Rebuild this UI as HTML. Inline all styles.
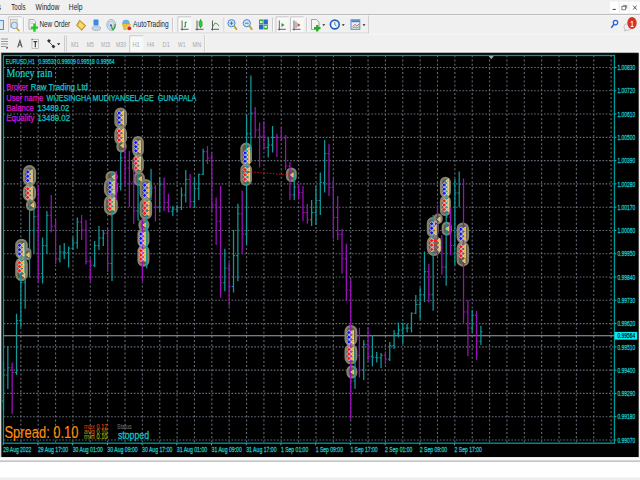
<!DOCTYPE html>
<html><head><meta charset="utf-8"><title>MT4</title>
<style>html,body{margin:0;padding:0;width:640px;height:480px;overflow:hidden;background:#f0f0f0}svg{display:block}</style>
</head><body>
<svg width="640" height="480" viewBox="0 0 640 480">
<rect x="0" y="0" width="640" height="480" fill="#f0f0f0"/>
<rect x="0" y="12.9" width="640" height="1" fill="#f7f7f7"/>
<rect x="0" y="13.9" width="640" height="1.15" fill="#bdbdbd"/>
<rect x="0" y="15.05" width="640" height="1.1" fill="#f5f5f5"/>
<text x="-3.5" y="10" font-family="'Liberation Sans', sans-serif" font-size="8.8" fill="#1e1e1e" font-weight="normal" text-anchor="start" textLength="4.5" lengthAdjust="spacingAndGlyphs" >s</text>
<text x="11.3" y="10" font-family="'Liberation Sans', sans-serif" font-size="8.8" fill="#1e1e1e" font-weight="normal" text-anchor="start" textLength="14.2" lengthAdjust="spacingAndGlyphs" >Tools</text>
<text x="35.6" y="10" font-family="'Liberation Sans', sans-serif" font-size="8.8" fill="#1e1e1e" font-weight="normal" text-anchor="start" textLength="23.8" lengthAdjust="spacingAndGlyphs" >Window</text>
<text x="68.8" y="10" font-family="'Liberation Sans', sans-serif" font-size="8.8" fill="#1e1e1e" font-weight="normal" text-anchor="start" textLength="13.8" lengthAdjust="spacingAndGlyphs" >Help</text>
<rect x="610" y="1.6" width="8.5" height="11.4" fill="#ffffff"/>
<rect x="620" y="1.6" width="8.5" height="11.4" fill="#ffffff"/>
<rect x="629.6" y="1.6" width="10.399999999999977" height="11.4" fill="#ffffff"/>
<rect x="612.6" y="8.9" width="3.2" height="1" fill="#404040"/>
<rect x="621.9" y="6.6" width="3.6" height="3.2" fill="none" stroke="#505050" stroke-width="0.7"/>
<path d="M623.1 5.4 H626.7 V8.6" fill="none" stroke="#505050" stroke-width="0.7"/>
<path d="M633.1 5.6 L636.6 9.6 M636.6 5.6 L633.1 9.6" stroke="#404040" stroke-width="0.85"/>
<rect x="0" y="32.6" width="368.6" height="1" fill="#d0d0d0"/>
<rect x="368" y="15.5" width="0.9" height="18.1" fill="#d0d0d0"/>
<rect x="0" y="33.6" width="640" height="0.9" fill="#f8f8f8"/>
<rect x="0" y="50.8" width="640" height="1.6" fill="#f6f6f6"/>
<rect x="-4" y="20.5" width="7.5" height="9" fill="#dde8f5" stroke="#5a8fd0" stroke-width="1"/>
<rect x="8.2" y="16.3" width="13.50" height="15.70" fill="#f8f8f8"/>
<path d="M8.7 32 V16.8 H21.7" fill="none" stroke="#c8c8c8" stroke-width="1"/>
<rect x="10.3" y="19.2" width="6.8" height="8" fill="#ece6da" stroke="#b0a490" stroke-width="0.6"/>
<ellipse cx="14.3" cy="25.4" rx="3.1" ry="3.4" fill="#d4e6f6" stroke="#6a9ad0" stroke-width="0.9"/>
<path d="M16.6 28 L19.4 31.2" stroke="#c8a020" stroke-width="1.5"/>
<rect x="23.2" y="17.5" width="0.9" height="14.0" fill="#c4c4c4"/>
<rect x="24.099999999999998" y="17.5" width="0.8" height="14.0" fill="#fbfbfb"/>
<path d="M29 19.5 H33.6 L35.6 21.5 V29.2 H29 Z" fill="#f2f2f2" stroke="#a0a0a0" stroke-width="0.8"/>
<path d="M30.2 21.8 H33 M30.2 23.6 H34" stroke="#b8b8b8" stroke-width="0.6"/>
<path d="M30.9 27.6 H38 M34.45 23.6 V31.8" stroke="#1ec81e" stroke-width="2.3"/>
<text x="39.4" y="26.9" font-family="'Liberation Sans', sans-serif" font-size="9.2" fill="#1e1e1e" font-weight="normal" text-anchor="start" textLength="30.8" lengthAdjust="spacingAndGlyphs" >New Order</text>
<path d="M76.6 25.4 L79.6 20.3 L85.6 25.6 L81.8 30.3 Z" fill="#e8c040" stroke="#a87410" stroke-width="0.8"/>
<path d="M78.2 25.6 L80.2 22.2 L84 25.6 L81.6 28.6 Z" fill="#f6dc70"/>
<rect x="93.5" y="19.5" width="5" height="6" rx="1" fill="#3c8ae0"/>
<ellipse cx="96.3" cy="28.2" rx="4.3" ry="2.3" fill="#c8d4e0" stroke="#8aa0b8" stroke-width="0.6"/>
<ellipse cx="111.2" cy="24.9" rx="4.4" ry="5.4" fill="#d8e2ea" stroke="#90a8c0" stroke-width="0.8"/>
<ellipse cx="111.2" cy="24.9" rx="2.6" ry="3.6" fill="none" stroke="#a8c0d0" stroke-width="0.7"/>
<circle cx="110.9" cy="25.3" r="1" fill="#2050c0"/>
<path d="M111.5 26 Q112 29 113 30 Q115.3 28 115.2 24" fill="none" stroke="#30a040" stroke-width="1.2"/>
<circle cx="126" cy="23.5" r="3.8" fill="#6ab0e0"/>
<path d="M122 24 H131 L129.5 30 H123.5 Z" fill="#e8c040"/>
<circle cx="129.3" cy="28.3" r="2.3" fill="#e02020" stroke="#ffffff" stroke-width="0.6"/>
<text x="133.1" y="26.9" font-family="'Liberation Sans', sans-serif" font-size="9.2" fill="#1e1e1e" font-weight="normal" text-anchor="start" textLength="35.6" lengthAdjust="spacingAndGlyphs" >AutoTrading</text>
<rect x="172.2" y="17.5" width="0.9" height="14.0" fill="#c4c4c4"/>
<rect x="173.1" y="17.5" width="0.8" height="14.0" fill="#fbfbfb"/>
<rect x="177.3" y="16.3" width="13.90" height="15.70" fill="#f8f8f8"/>
<path d="M177.8 32 V16.8 H191.2" fill="none" stroke="#c8c8c8" stroke-width="1"/>
<path d="M182.1 20.5 V30.5 M180.6 29.3 H188.6" stroke="#505050" stroke-width="0.9"/>
<path d="M185.3 21.8 V27.3 M184 26.8 H185.3 M185.3 22.3 H186.8" stroke="#20a030" stroke-width="1.1"/>
<path d="M197.0 20.5 V30.5 M195.5 29.3 H203.5" stroke="#505050" stroke-width="0.9"/>
<path d="M200.6 19 V28.2" stroke="#108a10" stroke-width="0.8"/>
<rect x="199.1" y="21" width="3" height="5.6" rx="0.8" fill="#2ed030" stroke="#10901a" stroke-width="0.6"/>
<path d="M212.5 20.5 V30.5 M211 29.3 H219" stroke="#505050" stroke-width="0.9"/>
<path d="M212.5 27 L215 23 L217.5 24 L219 26" fill="none" stroke="#30a030" stroke-width="0.9"/>
<rect x="223.6" y="17.5" width="0.9" height="14.0" fill="#c4c4c4"/>
<rect x="224.5" y="17.5" width="0.8" height="14.0" fill="#fbfbfb"/>
<circle cx="231.5" cy="23.2" r="3.6" fill="#cfe4f8" stroke="#4a88cc" stroke-width="1"/>
<path d="M234.1 25.8 L236.8 29.8" stroke="#c89a20" stroke-width="1.8"/>
<path d="M229.7 23.2 H233.3" stroke="#3070b8" stroke-width="0.9"/>
<path d="M231.5 21.4 V25" stroke="#3070b8" stroke-width="0.9"/>
<circle cx="246.8" cy="23.2" r="3.6" fill="#cfe4f8" stroke="#4a88cc" stroke-width="1"/>
<path d="M249.4 25.8 L252.10000000000002 29.8" stroke="#c89a20" stroke-width="1.8"/>
<path d="M245.0 23.2 H248.60000000000002" stroke="#3070b8" stroke-width="0.9"/>
<rect x="259" y="19.5" width="4.3" height="4.8" fill="#38a838"/>
<rect x="263.6" y="19.5" width="4.3" height="4.8" fill="#2a66d0"/>
<rect x="259" y="24.6" width="4.3" height="4.8" fill="#2a66d0"/>
<rect x="263.6" y="24.6" width="4.3" height="4.8" fill="#38a838"/>
<rect x="260" y="21" width="2.5" height="2" fill="#e8f0e8"/><rect x="264.4" y="25.8" width="2.5" height="2" fill="#e8f0e8"/>
<rect x="272.2" y="17.5" width="0.9" height="14.0" fill="#c4c4c4"/>
<rect x="273.09999999999997" y="17.5" width="0.8" height="14.0" fill="#fbfbfb"/>
<rect x="275.5" y="16.3" width="13.30" height="15.70" fill="#f8f8f8"/>
<path d="M276.0 32 V16.8 H288.8" fill="none" stroke="#c8c8c8" stroke-width="1"/>
<rect x="290" y="16.3" width="13.60" height="15.70" fill="#f8f8f8"/>
<path d="M290.5 32 V16.8 H303.6" fill="none" stroke="#c8c8c8" stroke-width="1"/>
<path d="M279.3 20.5 V30.5 M277.8 29.3 H285.8" stroke="#505050" stroke-width="0.9"/>
<path d="M281.5 23 L284.5 25 L281.5 27 Z" fill="#20a020"/>
<path d="M294.0 20.5 V30.5 M292.5 29.3 H300.5" stroke="#505050" stroke-width="0.9"/>
<path d="M296 21.5 V28" stroke="#606060" stroke-width="0.8"/><path d="M297.5 23 L300.5 25 L297.5 27 Z" fill="#d05020"/>
<rect x="306" y="17.5" width="0.9" height="14.0" fill="#c4c4c4"/>
<rect x="306.9" y="17.5" width="0.8" height="14.0" fill="#fbfbfb"/>
<path d="M311.5 19.5 H316.5 L319 22 V29.5 H311.5 Z" fill="#f4f4f4" stroke="#909090" stroke-width="0.8"/>
<path d="M314 28.2 H320.5 M317.2 25 V31.5" stroke="#20b020" stroke-width="2.2"/>
<path d="M322.3 24.3 H325.3 L323.8 26 Z" fill="#202020"/>
<circle cx="334.8" cy="24.5" r="4.4" fill="#f0f6ff" stroke="#2060c0" stroke-width="1.6"/>
<path d="M334.8 22 V24.8 L336.5 26" fill="none" stroke="#404040" stroke-width="0.7"/>
<path d="M341.8 24.3 H344.8 L343.3 26 Z" fill="#202020"/>
<rect x="351" y="19.8" width="8.8" height="9.5" fill="#e8f0fa" stroke="#4a80c0" stroke-width="0.9"/>
<rect x="351.5" y="20.2" width="8" height="2" fill="#4a80c0"/>
<path d="M352.5 26.5 L355 24.5 L357 26 L359 24" fill="none" stroke="#c04040" stroke-width="0.8"/>
<path d="M352.5 28 L355 27 L357 28 L359 26.5" fill="none" stroke="#40a040" stroke-width="0.8"/>
<path d="M362.5 24.3 H365.5 L364.0 26 Z" fill="#202020"/>
<circle cx="615.5" cy="22.6" r="2.2" fill="none" stroke="#2a62d0" stroke-width="1.2"/>
<path d="M614 24.3 L611.3 27.8" stroke="#2a62d0" stroke-width="1.5"/>
<ellipse cx="627.5" cy="27" rx="3.6" ry="3.3" fill="#f0f0f0" stroke="#b0b0b0" stroke-width="0.7"/>
<path d="M625 29.5 L624.3 31.2 L627 30" fill="#e0e0e0" stroke="#b0b0b0" stroke-width="0.5"/>
<ellipse cx="632" cy="23" rx="4.7" ry="5.9" fill="#d83220"/>
<text x="632" y="26.6" font-family="'Liberation Sans', sans-serif" font-size="9" fill="#ffffff" font-weight="bold" text-anchor="middle" textLength="3.2" lengthAdjust="spacingAndGlyphs" >1</text>
<path d="M1 39 H8 M1 41.5 H8 M1 44 H8 M1 46.5 H6.5" stroke="#808080" stroke-width="0.8"/>
<path d="M6 47.5 L8.2 46.5 L7 49.5 Z" fill="#404040"/>
<path d="M17.7 47.4 L19.9 40.6 L22.1 47.4 M18.6 45 H21.2" fill="none" stroke="#555555" stroke-width="1.15"/>
<rect x="32" y="39.3" width="6.6" height="9" fill="#f6f6f6" stroke="#a8a8a8" stroke-width="0.7"/>
<path d="M33.4 41.6 H37.3 M35.35 41.6 V47.2" stroke="#404040" stroke-width="1.2"/>
<rect x="31.6" y="38.8" width="1" height="1" fill="#404040"/>
<path d="M48.3 41.2 L53.8 46.8" stroke="#404040" stroke-width="0.9"/>
<path d="M47 40.8 L49 38.9 L50.9 40.8 L49 42.7 Z M51.5 46.6 L53.5 44.7 L55.4 46.6 L53.5 48.5 Z" fill="#303030"/>
<path d="M57 43.3 H60.3 L58.65 45.2 Z" fill="#202020"/>
<rect x="64.2" y="35.5" width="0.9" height="16.0" fill="#c4c4c4"/>
<rect x="65.10000000000001" y="35.5" width="0.8" height="16.0" fill="#fbfbfb"/>
<rect x="65.8" y="35.5" width="0.9" height="16" fill="#c4c4c4"/>
<text x="71" y="47.3" font-family="'Liberation Sans', sans-serif" font-size="7.8" fill="#a8a8a8" font-weight="normal" text-anchor="start" textLength="8" lengthAdjust="spacingAndGlyphs" >M1</text>
<text x="86.7" y="47.3" font-family="'Liberation Sans', sans-serif" font-size="7.8" fill="#a8a8a8" font-weight="normal" text-anchor="start" textLength="7.1" lengthAdjust="spacingAndGlyphs" >M5</text>
<text x="101" y="47.3" font-family="'Liberation Sans', sans-serif" font-size="7.8" fill="#a8a8a8" font-weight="normal" text-anchor="start" textLength="9.2" lengthAdjust="spacingAndGlyphs" >M15</text>
<text x="116" y="47.3" font-family="'Liberation Sans', sans-serif" font-size="7.8" fill="#a8a8a8" font-weight="normal" text-anchor="start" textLength="10.2" lengthAdjust="spacingAndGlyphs" >M30</text>
<rect x="129.2" y="35.2" width="14.00" height="17.30" fill="#f8f8f8"/>
<path d="M129.7 52.5 V35.7 H143.2" fill="none" stroke="#c8c8c8" stroke-width="1"/>
<text x="132.5" y="47.3" font-family="'Liberation Sans', sans-serif" font-size="7.8" fill="#a8a8a8" font-weight="normal" text-anchor="start" textLength="7.3" lengthAdjust="spacingAndGlyphs" >H1</text>
<text x="147" y="47.3" font-family="'Liberation Sans', sans-serif" font-size="7.8" fill="#a8a8a8" font-weight="normal" text-anchor="start" textLength="7.3" lengthAdjust="spacingAndGlyphs" >H4</text>
<text x="162.6" y="47.3" font-family="'Liberation Sans', sans-serif" font-size="7.8" fill="#a8a8a8" font-weight="normal" text-anchor="start" textLength="7.2" lengthAdjust="spacingAndGlyphs" >D1</text>
<text x="178" y="47.3" font-family="'Liberation Sans', sans-serif" font-size="7.8" fill="#a8a8a8" font-weight="normal" text-anchor="start" textLength="7.4" lengthAdjust="spacingAndGlyphs" >W1</text>
<text x="192.5" y="47.3" font-family="'Liberation Sans', sans-serif" font-size="7.8" fill="#a8a8a8" font-weight="normal" text-anchor="start" textLength="8.7" lengthAdjust="spacingAndGlyphs" >MN</text>
<rect x="204.3" y="35" width="0.9" height="16.700000000000003" fill="#c4c4c4"/>
<rect x="205.20000000000002" y="35" width="0.8" height="16.700000000000003" fill="#fbfbfb"/>
<rect x="0.8" y="52.4" width="637.8" height="404.6" fill="#8a8686"/>
<rect x="1.6" y="53.1" width="637" height="403.9" fill="#000000"/>
<rect x="0" y="457" width="640" height="0.8" fill="#e4e4e4"/>
<rect x="0" y="457.8" width="640" height="2.6" fill="#f8f8f8"/>
<rect x="0" y="460.4" width="640" height="1.6" fill="#c6c6c6"/>
<rect x="0" y="462" width="640" height="15.6" fill="#ffffff"/>
<rect x="0" y="477.6" width="640" height="2.4" fill="#f0f0f0"/>
<line x1="3.74" y1="67.5" x2="613.45" y2="67.5" stroke="#656d79" stroke-width="1.1" stroke-dasharray="1.6 1.654"/>
<line x1="3.74" y1="90.78" x2="613.45" y2="90.78" stroke="#656d79" stroke-width="1.1" stroke-dasharray="1.6 1.654"/>
<line x1="3.74" y1="114.06" x2="613.45" y2="114.06" stroke="#656d79" stroke-width="1.1" stroke-dasharray="1.6 1.654"/>
<line x1="3.74" y1="137.34" x2="613.45" y2="137.34" stroke="#656d79" stroke-width="1.1" stroke-dasharray="1.6 1.654"/>
<line x1="3.74" y1="160.62" x2="613.45" y2="160.62" stroke="#656d79" stroke-width="1.1" stroke-dasharray="1.6 1.654"/>
<line x1="3.74" y1="183.9" x2="613.45" y2="183.9" stroke="#656d79" stroke-width="1.1" stroke-dasharray="1.6 1.654"/>
<line x1="3.74" y1="207.18" x2="613.45" y2="207.18" stroke="#656d79" stroke-width="1.1" stroke-dasharray="1.6 1.654"/>
<line x1="3.74" y1="230.46" x2="613.45" y2="230.46" stroke="#656d79" stroke-width="1.1" stroke-dasharray="1.6 1.654"/>
<line x1="3.74" y1="253.74" x2="613.45" y2="253.74" stroke="#656d79" stroke-width="1.1" stroke-dasharray="1.6 1.654"/>
<line x1="3.74" y1="277.02" x2="613.45" y2="277.02" stroke="#656d79" stroke-width="1.1" stroke-dasharray="1.6 1.654"/>
<line x1="3.74" y1="300.3" x2="613.45" y2="300.3" stroke="#656d79" stroke-width="1.1" stroke-dasharray="1.6 1.654"/>
<line x1="3.74" y1="323.58000000000004" x2="613.45" y2="323.58000000000004" stroke="#656d79" stroke-width="1.1" stroke-dasharray="1.6 1.654"/>
<line x1="3.74" y1="346.86" x2="613.45" y2="346.86" stroke="#656d79" stroke-width="1.1" stroke-dasharray="1.6 1.654"/>
<line x1="3.74" y1="370.14" x2="613.45" y2="370.14" stroke="#656d79" stroke-width="1.1" stroke-dasharray="1.6 1.654"/>
<line x1="3.74" y1="393.42" x2="613.45" y2="393.42" stroke="#656d79" stroke-width="1.1" stroke-dasharray="1.6 1.654"/>
<line x1="3.74" y1="416.70000000000005" x2="613.45" y2="416.70000000000005" stroke="#656d79" stroke-width="1.1" stroke-dasharray="1.6 1.654"/>
<line x1="3.74" y1="439.98" x2="613.45" y2="439.98" stroke="#656d79" stroke-width="1.1" stroke-dasharray="1.6 1.654"/>
<line x1="20.86" y1="55.35" x2="20.86" y2="442.2" stroke="#656d79" stroke-width="1.1" stroke-dasharray="1.9 2.286"/>
<line x1="38.22" y1="55.35" x2="38.22" y2="442.2" stroke="#656d79" stroke-width="1.1" stroke-dasharray="1.9 2.286"/>
<line x1="55.58" y1="55.35" x2="55.58" y2="442.2" stroke="#656d79" stroke-width="1.1" stroke-dasharray="1.9 2.286"/>
<line x1="72.94" y1="55.35" x2="72.94" y2="442.2" stroke="#656d79" stroke-width="1.1" stroke-dasharray="1.9 2.286"/>
<line x1="90.3" y1="55.35" x2="90.3" y2="442.2" stroke="#656d79" stroke-width="1.1" stroke-dasharray="1.9 2.286"/>
<line x1="107.66" y1="55.35" x2="107.66" y2="442.2" stroke="#656d79" stroke-width="1.1" stroke-dasharray="1.9 2.286"/>
<line x1="125.02" y1="55.35" x2="125.02" y2="442.2" stroke="#656d79" stroke-width="1.1" stroke-dasharray="1.9 2.286"/>
<line x1="142.38" y1="55.35" x2="142.38" y2="442.2" stroke="#656d79" stroke-width="1.1" stroke-dasharray="1.9 2.286"/>
<line x1="159.74" y1="55.35" x2="159.74" y2="442.2" stroke="#656d79" stroke-width="1.1" stroke-dasharray="1.9 2.286"/>
<line x1="177.1" y1="55.35" x2="177.1" y2="442.2" stroke="#656d79" stroke-width="1.1" stroke-dasharray="1.9 2.286"/>
<line x1="194.45999999999998" y1="55.35" x2="194.45999999999998" y2="442.2" stroke="#656d79" stroke-width="1.1" stroke-dasharray="1.9 2.286"/>
<line x1="211.82" y1="55.35" x2="211.82" y2="442.2" stroke="#656d79" stroke-width="1.1" stroke-dasharray="1.9 2.286"/>
<line x1="229.18" y1="55.35" x2="229.18" y2="442.2" stroke="#656d79" stroke-width="1.1" stroke-dasharray="1.9 2.286"/>
<line x1="246.54" y1="55.35" x2="246.54" y2="442.2" stroke="#656d79" stroke-width="1.1" stroke-dasharray="1.9 2.286"/>
<line x1="263.9" y1="55.35" x2="263.9" y2="442.2" stroke="#656d79" stroke-width="1.1" stroke-dasharray="1.9 2.286"/>
<line x1="281.26" y1="55.35" x2="281.26" y2="442.2" stroke="#656d79" stroke-width="1.1" stroke-dasharray="1.9 2.286"/>
<line x1="298.62" y1="55.35" x2="298.62" y2="442.2" stroke="#656d79" stroke-width="1.1" stroke-dasharray="1.9 2.286"/>
<line x1="315.98" y1="55.35" x2="315.98" y2="442.2" stroke="#656d79" stroke-width="1.1" stroke-dasharray="1.9 2.286"/>
<line x1="333.34" y1="55.35" x2="333.34" y2="442.2" stroke="#656d79" stroke-width="1.1" stroke-dasharray="1.9 2.286"/>
<line x1="350.7" y1="55.35" x2="350.7" y2="442.2" stroke="#656d79" stroke-width="1.1" stroke-dasharray="1.9 2.286"/>
<line x1="368.06" y1="55.35" x2="368.06" y2="442.2" stroke="#656d79" stroke-width="1.1" stroke-dasharray="1.9 2.286"/>
<line x1="385.41999999999996" y1="55.35" x2="385.41999999999996" y2="442.2" stroke="#656d79" stroke-width="1.1" stroke-dasharray="1.9 2.286"/>
<line x1="402.78" y1="55.35" x2="402.78" y2="442.2" stroke="#656d79" stroke-width="1.1" stroke-dasharray="1.9 2.286"/>
<line x1="420.14" y1="55.35" x2="420.14" y2="442.2" stroke="#656d79" stroke-width="1.1" stroke-dasharray="1.9 2.286"/>
<line x1="437.5" y1="55.35" x2="437.5" y2="442.2" stroke="#656d79" stroke-width="1.1" stroke-dasharray="1.9 2.286"/>
<line x1="454.86" y1="55.35" x2="454.86" y2="442.2" stroke="#656d79" stroke-width="1.1" stroke-dasharray="1.9 2.286"/>
<line x1="472.21999999999997" y1="55.35" x2="472.21999999999997" y2="442.2" stroke="#656d79" stroke-width="1.1" stroke-dasharray="1.9 2.286"/>
<line x1="489.58" y1="55.35" x2="489.58" y2="442.2" stroke="#656d79" stroke-width="1.1" stroke-dasharray="1.9 2.286"/>
<line x1="506.94" y1="55.35" x2="506.94" y2="442.2" stroke="#656d79" stroke-width="1.1" stroke-dasharray="1.9 2.286"/>
<line x1="524.3" y1="55.35" x2="524.3" y2="442.2" stroke="#656d79" stroke-width="1.1" stroke-dasharray="1.9 2.286"/>
<line x1="541.66" y1="55.35" x2="541.66" y2="442.2" stroke="#656d79" stroke-width="1.1" stroke-dasharray="1.9 2.286"/>
<line x1="559.02" y1="55.35" x2="559.02" y2="442.2" stroke="#656d79" stroke-width="1.1" stroke-dasharray="1.9 2.286"/>
<line x1="576.38" y1="55.35" x2="576.38" y2="442.2" stroke="#656d79" stroke-width="1.1" stroke-dasharray="1.9 2.286"/>
<line x1="593.74" y1="55.35" x2="593.74" y2="442.2" stroke="#656d79" stroke-width="1.1" stroke-dasharray="1.9 2.286"/>
<line x1="611.1" y1="55.35" x2="611.1" y2="442.2" stroke="#656d79" stroke-width="1.1" stroke-dasharray="1.9 2.286"/>
<rect x="3.45" y="55.45" width="611.0" height="387.75" fill="none" stroke="#009a9a" stroke-width="1.3"/>
<line x1="3.45" y1="335.7" x2="614.45" y2="335.7" stroke="#9ca6b2" stroke-width="1.05"/>
<rect x="16.30" y="239.80" width="10.40" height="18.10" rx="5.20" fill="#5c5a4e" stroke="#85826d" stroke-width="2.2"/>
<rect x="16.30" y="258.60" width="10.40" height="21.30" rx="5.20" fill="#5c5a4e" stroke="#85826d" stroke-width="2.2"/>
<rect x="25.00" y="249.10" width="5.30" height="9.80" rx="2.65" fill="#5c5a4e" stroke="#85826d" stroke-width="2.2"/>
<rect x="24.00" y="166.10" width="11.00" height="18.80" rx="5.50" fill="#5c5a4e" stroke="#85826d" stroke-width="2.2"/>
<rect x="24.00" y="185.10" width="11.00" height="15.30" rx="5.50" fill="#5c5a4e" stroke="#85826d" stroke-width="2.2"/>
<rect x="27.00" y="200.60" width="8.00" height="9.30" rx="4.00" fill="#5c5a4e" stroke="#85826d" stroke-width="2.2"/>
<rect x="115.40" y="108.60" width="10.50" height="18.80" rx="5.25" fill="#5c5a4e" stroke="#85826d" stroke-width="2.2"/>
<rect x="115.40" y="127.60" width="10.50" height="16.30" rx="5.25" fill="#5c5a4e" stroke="#85826d" stroke-width="2.2"/>
<rect x="117.50" y="141.60" width="8.00" height="9.80" rx="4.00" fill="#5c5a4e" stroke="#85826d" stroke-width="2.2"/>
<rect x="133.30" y="137.10" width="9.45" height="18.80" rx="4.72" fill="#5c5a4e" stroke="#85826d" stroke-width="2.2"/>
<rect x="133.30" y="156.10" width="9.45" height="16.30" rx="4.72" fill="#5c5a4e" stroke="#85826d" stroke-width="2.2"/>
<rect x="134.30" y="172.80" width="9.50" height="12.10" rx="4.75" fill="#5c5a4e" stroke="#85826d" stroke-width="2.2"/>
<rect x="106.50" y="172.10" width="10.20" height="9.30" rx="4.65" fill="#5c5a4e" stroke="#85826d" stroke-width="2.2"/>
<rect x="105.00" y="179.10" width="11.70" height="17.30" rx="5.85" fill="#5c5a4e" stroke="#85826d" stroke-width="2.2"/>
<rect x="105.00" y="196.10" width="11.70" height="18.20" rx="5.85" fill="#5c5a4e" stroke="#85826d" stroke-width="2.2"/>
<rect x="140.60" y="180.10" width="10.40" height="18.80" rx="5.20" fill="#5c5a4e" stroke="#85826d" stroke-width="2.2"/>
<rect x="140.60" y="199.10" width="10.40" height="19.30" rx="5.20" fill="#5c5a4e" stroke="#85826d" stroke-width="2.2"/>
<rect x="139.50" y="220.10" width="8.80" height="9.80" rx="4.40" fill="#5c5a4e" stroke="#85826d" stroke-width="2.2"/>
<rect x="138.50" y="229.10" width="9.80" height="17.30" rx="4.90" fill="#5c5a4e" stroke="#85826d" stroke-width="2.2"/>
<rect x="138.50" y="246.10" width="9.80" height="19.50" rx="4.90" fill="#5c5a4e" stroke="#85826d" stroke-width="2.2"/>
<rect x="241.40" y="143.60" width="9.50" height="20.80" rx="4.75" fill="#5c5a4e" stroke="#85826d" stroke-width="2.2"/>
<rect x="241.40" y="164.60" width="9.50" height="20.30" rx="4.75" fill="#5c5a4e" stroke="#85826d" stroke-width="2.2"/>
<rect x="287.00" y="168.60" width="8.70" height="12.30" rx="4.35" fill="#5c5a4e" stroke="#85826d" stroke-width="2.2"/>
<rect x="441.00" y="177.80" width="8.80" height="18.60" rx="4.40" fill="#5c5a4e" stroke="#85826d" stroke-width="2.2"/>
<rect x="441.00" y="196.60" width="8.80" height="18.30" rx="4.40" fill="#5c5a4e" stroke="#85826d" stroke-width="2.2"/>
<rect x="427.90" y="218.10" width="9.70" height="18.30" rx="4.85" fill="#5c5a4e" stroke="#85826d" stroke-width="2.2"/>
<rect x="427.90" y="236.60" width="12.10" height="18.30" rx="6.05" fill="#5c5a4e" stroke="#85826d" stroke-width="2.2"/>
<rect x="434.60" y="214.60" width="7.00" height="8.30" rx="3.50" fill="#5c5a4e" stroke="#85826d" stroke-width="2.2"/>
<rect x="442.70" y="222.80" width="8.00" height="11.90" rx="4.00" fill="#5c5a4e" stroke="#85826d" stroke-width="2.2"/>
<rect x="457.70" y="223.60" width="10.30" height="18.80" rx="5.15" fill="#5c5a4e" stroke="#85826d" stroke-width="2.2"/>
<rect x="457.70" y="242.60" width="10.30" height="23.00" rx="5.15" fill="#5c5a4e" stroke="#85826d" stroke-width="2.2"/>
<rect x="345.60" y="326.10" width="10.60" height="18.80" rx="5.30" fill="#5c5a4e" stroke="#85826d" stroke-width="2.2"/>
<rect x="345.60" y="345.10" width="10.60" height="18.20" rx="5.30" fill="#5c5a4e" stroke="#85826d" stroke-width="2.2"/>
<rect x="347.50" y="366.40" width="8.70" height="11.00" rx="4.35" fill="#5c5a4e" stroke="#85826d" stroke-width="2.2"/>
<line x1="3.50" y1="361.0" x2="3.50" y2="411.0" stroke="#109a9a" stroke-width="1.25"/>
<line x1="1.90" y1="401.0" x2="3.50" y2="401.0" stroke="#109a9a" stroke-width="1.05"/>
<line x1="3.50" y1="375.0" x2="5.10" y2="375.0" stroke="#109a9a" stroke-width="1.05"/>
<line x1="7.84" y1="346.0" x2="7.84" y2="389.0" stroke="#109a9a" stroke-width="1.25"/>
<line x1="6.24" y1="375.0" x2="7.84" y2="375.0" stroke="#109a9a" stroke-width="1.05"/>
<line x1="7.84" y1="367.8" x2="9.44" y2="367.8" stroke="#109a9a" stroke-width="1.05"/>
<line x1="12.18" y1="362.5" x2="12.18" y2="414.0" stroke="#9c10bc" stroke-width="1.25"/>
<line x1="10.58" y1="367.8" x2="12.18" y2="367.8" stroke="#9c10bc" stroke-width="1.05"/>
<line x1="12.18" y1="372.5" x2="13.78" y2="372.5" stroke="#9c10bc" stroke-width="1.05"/>
<line x1="16.52" y1="313.75" x2="16.52" y2="375.0" stroke="#109a9a" stroke-width="1.25"/>
<line x1="14.92" y1="372.5" x2="16.52" y2="372.5" stroke="#109a9a" stroke-width="1.05"/>
<line x1="16.52" y1="320.6" x2="18.12" y2="320.6" stroke="#109a9a" stroke-width="1.05"/>
<line x1="20.86" y1="256.0" x2="20.86" y2="327.5" stroke="#109a9a" stroke-width="1.25"/>
<line x1="19.26" y1="320.6" x2="20.86" y2="320.6" stroke="#109a9a" stroke-width="1.05"/>
<line x1="20.86" y1="282.4" x2="22.46" y2="282.4" stroke="#109a9a" stroke-width="1.05"/>
<line x1="25.20" y1="242.0" x2="25.20" y2="308.75" stroke="#109a9a" stroke-width="1.25"/>
<line x1="23.60" y1="282.4" x2="25.20" y2="282.4" stroke="#109a9a" stroke-width="1.05"/>
<line x1="25.20" y1="259.8" x2="26.80" y2="259.8" stroke="#109a9a" stroke-width="1.05"/>
<line x1="29.54" y1="173.0" x2="29.54" y2="277.5" stroke="#109a9a" stroke-width="1.25"/>
<line x1="27.94" y1="259.8" x2="29.54" y2="259.8" stroke="#109a9a" stroke-width="1.05"/>
<line x1="29.54" y1="230.5" x2="31.14" y2="230.5" stroke="#109a9a" stroke-width="1.05"/>
<line x1="33.88" y1="207.5" x2="33.88" y2="253.5" stroke="#109a9a" stroke-width="1.25"/>
<line x1="32.28" y1="230.5" x2="33.88" y2="230.5" stroke="#109a9a" stroke-width="1.05"/>
<line x1="33.88" y1="216.7" x2="35.48" y2="216.7" stroke="#109a9a" stroke-width="1.05"/>
<line x1="38.22" y1="185.6" x2="38.22" y2="282.5" stroke="#9c10bc" stroke-width="1.25"/>
<line x1="36.62" y1="216.7" x2="38.22" y2="216.7" stroke="#9c10bc" stroke-width="1.05"/>
<line x1="38.22" y1="273.5" x2="39.82" y2="273.5" stroke="#9c10bc" stroke-width="1.05"/>
<line x1="42.56" y1="237.5" x2="42.56" y2="283.5" stroke="#109a9a" stroke-width="1.25"/>
<line x1="40.96" y1="273.5" x2="42.56" y2="273.5" stroke="#109a9a" stroke-width="1.05"/>
<line x1="42.56" y1="245.6" x2="44.16" y2="245.6" stroke="#109a9a" stroke-width="1.05"/>
<line x1="46.90" y1="211.0" x2="46.90" y2="253.75" stroke="#109a9a" stroke-width="1.25"/>
<line x1="45.30" y1="245.6" x2="46.90" y2="245.6" stroke="#109a9a" stroke-width="1.05"/>
<line x1="46.90" y1="215.3" x2="48.50" y2="215.3" stroke="#109a9a" stroke-width="1.05"/>
<line x1="51.24" y1="195.0" x2="51.24" y2="232.5" stroke="#9c10bc" stroke-width="1.25"/>
<line x1="49.64" y1="215.3" x2="51.24" y2="215.3" stroke="#9c10bc" stroke-width="1.05"/>
<line x1="51.24" y1="226.2" x2="52.84" y2="226.2" stroke="#9c10bc" stroke-width="1.05"/>
<line x1="55.58" y1="220.0" x2="55.58" y2="264.0" stroke="#9c10bc" stroke-width="1.25"/>
<line x1="53.98" y1="226.2" x2="55.58" y2="226.2" stroke="#9c10bc" stroke-width="1.05"/>
<line x1="55.58" y1="259.0" x2="57.18" y2="259.0" stroke="#9c10bc" stroke-width="1.05"/>
<line x1="59.92" y1="245.0" x2="59.92" y2="262.5" stroke="#109a9a" stroke-width="1.25"/>
<line x1="58.32" y1="259.0" x2="59.92" y2="259.0" stroke="#109a9a" stroke-width="1.05"/>
<line x1="59.92" y1="252.0" x2="61.52" y2="252.0" stroke="#109a9a" stroke-width="1.05"/>
<line x1="64.26" y1="243.0" x2="64.26" y2="259.0" stroke="#109a9a" stroke-width="1.25"/>
<line x1="62.66" y1="252.0" x2="64.26" y2="252.0" stroke="#109a9a" stroke-width="1.05"/>
<line x1="64.26" y1="252.8" x2="65.86" y2="252.8" stroke="#109a9a" stroke-width="1.05"/>
<line x1="68.60" y1="246.5" x2="68.60" y2="267.5" stroke="#109a9a" stroke-width="1.25"/>
<line x1="67.00" y1="252.8" x2="68.60" y2="252.8" stroke="#109a9a" stroke-width="1.05"/>
<line x1="68.60" y1="248.2" x2="70.20" y2="248.2" stroke="#109a9a" stroke-width="1.05"/>
<line x1="72.94" y1="237.0" x2="72.94" y2="250.0" stroke="#109a9a" stroke-width="1.25"/>
<line x1="71.34" y1="248.2" x2="72.94" y2="248.2" stroke="#109a9a" stroke-width="1.05"/>
<line x1="72.94" y1="242.9" x2="74.54" y2="242.9" stroke="#109a9a" stroke-width="1.05"/>
<line x1="77.28" y1="217.5" x2="77.28" y2="248.75" stroke="#109a9a" stroke-width="1.25"/>
<line x1="75.68" y1="242.9" x2="77.28" y2="242.9" stroke="#109a9a" stroke-width="1.05"/>
<line x1="77.28" y1="222.0" x2="78.88" y2="222.0" stroke="#109a9a" stroke-width="1.05"/>
<line x1="81.62" y1="215.0" x2="81.62" y2="240.0" stroke="#9c10bc" stroke-width="1.25"/>
<line x1="80.02" y1="222.0" x2="81.62" y2="222.0" stroke="#9c10bc" stroke-width="1.05"/>
<line x1="81.62" y1="230.0" x2="83.22" y2="230.0" stroke="#9c10bc" stroke-width="1.05"/>
<line x1="85.96" y1="220.0" x2="85.96" y2="264.5" stroke="#9c10bc" stroke-width="1.25"/>
<line x1="84.36" y1="230.0" x2="85.96" y2="230.0" stroke="#9c10bc" stroke-width="1.05"/>
<line x1="85.96" y1="261.5" x2="87.56" y2="261.5" stroke="#9c10bc" stroke-width="1.05"/>
<line x1="90.30" y1="258.5" x2="90.30" y2="281.5" stroke="#9c10bc" stroke-width="1.25"/>
<line x1="88.70" y1="261.5" x2="90.30" y2="261.5" stroke="#9c10bc" stroke-width="1.05"/>
<line x1="90.30" y1="265.3" x2="91.90" y2="265.3" stroke="#9c10bc" stroke-width="1.05"/>
<line x1="94.64" y1="241.0" x2="94.64" y2="267.0" stroke="#109a9a" stroke-width="1.25"/>
<line x1="93.04" y1="265.3" x2="94.64" y2="265.3" stroke="#109a9a" stroke-width="1.05"/>
<line x1="94.64" y1="245.5" x2="96.24" y2="245.5" stroke="#109a9a" stroke-width="1.05"/>
<line x1="98.98" y1="226.0" x2="98.98" y2="250.0" stroke="#109a9a" stroke-width="1.25"/>
<line x1="97.38" y1="245.5" x2="98.98" y2="245.5" stroke="#109a9a" stroke-width="1.05"/>
<line x1="98.98" y1="238.0" x2="100.58" y2="238.0" stroke="#109a9a" stroke-width="1.05"/>
<line x1="103.32" y1="230.0" x2="103.32" y2="246.0" stroke="#109a9a" stroke-width="1.25"/>
<line x1="101.72" y1="238.0" x2="103.32" y2="238.0" stroke="#109a9a" stroke-width="1.05"/>
<line x1="103.32" y1="233.2" x2="104.92" y2="233.2" stroke="#109a9a" stroke-width="1.05"/>
<line x1="107.66" y1="229.0" x2="107.66" y2="272.0" stroke="#9c10bc" stroke-width="1.25"/>
<line x1="106.06" y1="233.2" x2="107.66" y2="233.2" stroke="#9c10bc" stroke-width="1.05"/>
<line x1="107.66" y1="263.4" x2="109.26" y2="263.4" stroke="#9c10bc" stroke-width="1.05"/>
<line x1="112.00" y1="171.0" x2="112.00" y2="281.0" stroke="#109a9a" stroke-width="1.25"/>
<line x1="110.40" y1="263.4" x2="112.00" y2="263.4" stroke="#109a9a" stroke-width="1.05"/>
<line x1="112.00" y1="176.8" x2="113.60" y2="176.8" stroke="#109a9a" stroke-width="1.05"/>
<line x1="116.34" y1="171.0" x2="116.34" y2="200.0" stroke="#9c10bc" stroke-width="1.25"/>
<line x1="114.74" y1="176.8" x2="116.34" y2="176.8" stroke="#9c10bc" stroke-width="1.05"/>
<line x1="116.34" y1="186.7" x2="117.94" y2="186.7" stroke="#9c10bc" stroke-width="1.05"/>
<line x1="120.68" y1="151.0" x2="120.68" y2="190.6" stroke="#109a9a" stroke-width="1.25"/>
<line x1="119.08" y1="186.7" x2="120.68" y2="186.7" stroke="#109a9a" stroke-width="1.05"/>
<line x1="120.68" y1="157.8" x2="122.28" y2="157.8" stroke="#109a9a" stroke-width="1.05"/>
<line x1="125.02" y1="147.5" x2="125.02" y2="185.0" stroke="#9c10bc" stroke-width="1.25"/>
<line x1="123.42" y1="157.8" x2="125.02" y2="157.8" stroke="#9c10bc" stroke-width="1.05"/>
<line x1="125.02" y1="168.0" x2="126.62" y2="168.0" stroke="#9c10bc" stroke-width="1.05"/>
<line x1="129.36" y1="151.0" x2="129.36" y2="207.0" stroke="#9c10bc" stroke-width="1.25"/>
<line x1="127.76" y1="168.0" x2="129.36" y2="168.0" stroke="#9c10bc" stroke-width="1.05"/>
<line x1="129.36" y1="182.0" x2="130.96" y2="182.0" stroke="#9c10bc" stroke-width="1.05"/>
<line x1="133.70" y1="157.0" x2="133.70" y2="224.0" stroke="#9c10bc" stroke-width="1.25"/>
<line x1="132.10" y1="182.0" x2="133.70" y2="182.0" stroke="#9c10bc" stroke-width="1.05"/>
<line x1="133.70" y1="211.0" x2="135.30" y2="211.0" stroke="#9c10bc" stroke-width="1.05"/>
<line x1="138.04" y1="174.0" x2="138.04" y2="220.3" stroke="#109a9a" stroke-width="1.25"/>
<line x1="136.44" y1="211.0" x2="138.04" y2="211.0" stroke="#109a9a" stroke-width="1.05"/>
<line x1="138.04" y1="220.1" x2="139.64" y2="220.1" stroke="#109a9a" stroke-width="1.05"/>
<line x1="142.38" y1="220.0" x2="142.38" y2="281.0" stroke="#9c10bc" stroke-width="1.25"/>
<line x1="140.78" y1="220.1" x2="142.38" y2="220.1" stroke="#9c10bc" stroke-width="1.05"/>
<line x1="142.38" y1="258.8" x2="143.98" y2="258.8" stroke="#9c10bc" stroke-width="1.05"/>
<line x1="146.72" y1="215.0" x2="146.72" y2="268.5" stroke="#109a9a" stroke-width="1.25"/>
<line x1="145.12" y1="258.8" x2="146.72" y2="258.8" stroke="#109a9a" stroke-width="1.05"/>
<line x1="146.72" y1="215.0" x2="148.32" y2="215.0" stroke="#109a9a" stroke-width="1.05"/>
<line x1="151.06" y1="168.75" x2="151.06" y2="200.0" stroke="#109a9a" stroke-width="1.25"/>
<line x1="149.46" y1="200.0" x2="151.06" y2="200.0" stroke="#109a9a" stroke-width="1.05"/>
<line x1="151.06" y1="188.0" x2="152.66" y2="188.0" stroke="#109a9a" stroke-width="1.05"/>
<line x1="155.40" y1="185.0" x2="155.40" y2="221.5" stroke="#9c10bc" stroke-width="1.25"/>
<line x1="153.80" y1="188.0" x2="155.40" y2="188.0" stroke="#9c10bc" stroke-width="1.05"/>
<line x1="155.40" y1="207.0" x2="157.00" y2="207.0" stroke="#9c10bc" stroke-width="1.05"/>
<line x1="159.74" y1="177.0" x2="159.74" y2="212.5" stroke="#109a9a" stroke-width="1.25"/>
<line x1="158.14" y1="207.0" x2="159.74" y2="207.0" stroke="#109a9a" stroke-width="1.05"/>
<line x1="159.74" y1="184.2" x2="161.34" y2="184.2" stroke="#109a9a" stroke-width="1.05"/>
<line x1="164.08" y1="177.5" x2="164.08" y2="211.0" stroke="#9c10bc" stroke-width="1.25"/>
<line x1="162.48" y1="184.2" x2="164.08" y2="184.2" stroke="#9c10bc" stroke-width="1.05"/>
<line x1="164.08" y1="202.4" x2="165.68" y2="202.4" stroke="#9c10bc" stroke-width="1.05"/>
<line x1="168.42" y1="193.75" x2="168.42" y2="212.5" stroke="#9c10bc" stroke-width="1.25"/>
<line x1="166.82" y1="202.4" x2="168.42" y2="202.4" stroke="#9c10bc" stroke-width="1.05"/>
<line x1="168.42" y1="211.2" x2="170.02" y2="211.2" stroke="#9c10bc" stroke-width="1.05"/>
<line x1="172.76" y1="206.0" x2="172.76" y2="216.0" stroke="#109a9a" stroke-width="1.25"/>
<line x1="171.16" y1="211.2" x2="172.76" y2="211.2" stroke="#109a9a" stroke-width="1.05"/>
<line x1="172.76" y1="209.2" x2="174.36" y2="209.2" stroke="#109a9a" stroke-width="1.05"/>
<line x1="177.10" y1="205.0" x2="177.10" y2="212.5" stroke="#109a9a" stroke-width="1.25"/>
<line x1="175.50" y1="209.2" x2="177.10" y2="209.2" stroke="#109a9a" stroke-width="1.05"/>
<line x1="177.10" y1="207.5" x2="178.70" y2="207.5" stroke="#109a9a" stroke-width="1.05"/>
<line x1="181.44" y1="187.5" x2="181.44" y2="210.0" stroke="#109a9a" stroke-width="1.25"/>
<line x1="179.84" y1="207.5" x2="181.44" y2="207.5" stroke="#109a9a" stroke-width="1.05"/>
<line x1="181.44" y1="195.0" x2="183.04" y2="195.0" stroke="#109a9a" stroke-width="1.05"/>
<line x1="185.78" y1="170.0" x2="185.78" y2="202.5" stroke="#109a9a" stroke-width="1.25"/>
<line x1="184.18" y1="195.0" x2="185.78" y2="195.0" stroke="#109a9a" stroke-width="1.05"/>
<line x1="185.78" y1="179.5" x2="187.38" y2="179.5" stroke="#109a9a" stroke-width="1.05"/>
<line x1="190.12" y1="173.75" x2="190.12" y2="207.5" stroke="#9c10bc" stroke-width="1.25"/>
<line x1="188.52" y1="179.5" x2="190.12" y2="179.5" stroke="#9c10bc" stroke-width="1.05"/>
<line x1="190.12" y1="201.5" x2="191.72" y2="201.5" stroke="#9c10bc" stroke-width="1.05"/>
<line x1="194.46" y1="177.5" x2="194.46" y2="207.5" stroke="#109a9a" stroke-width="1.25"/>
<line x1="192.86" y1="201.5" x2="194.46" y2="201.5" stroke="#109a9a" stroke-width="1.05"/>
<line x1="194.46" y1="188.8" x2="196.06" y2="188.8" stroke="#109a9a" stroke-width="1.05"/>
<line x1="198.80" y1="173.75" x2="198.80" y2="200.0" stroke="#109a9a" stroke-width="1.25"/>
<line x1="197.20" y1="188.8" x2="198.80" y2="188.8" stroke="#109a9a" stroke-width="1.05"/>
<line x1="198.80" y1="174.4" x2="200.40" y2="174.4" stroke="#109a9a" stroke-width="1.05"/>
<line x1="203.14" y1="148.75" x2="203.14" y2="175.0" stroke="#109a9a" stroke-width="1.25"/>
<line x1="201.54" y1="174.4" x2="203.14" y2="174.4" stroke="#109a9a" stroke-width="1.05"/>
<line x1="203.14" y1="151.8" x2="204.74" y2="151.8" stroke="#109a9a" stroke-width="1.05"/>
<line x1="207.48" y1="146.0" x2="207.48" y2="164.0" stroke="#9c10bc" stroke-width="1.25"/>
<line x1="205.88" y1="151.8" x2="207.48" y2="151.8" stroke="#9c10bc" stroke-width="1.05"/>
<line x1="207.48" y1="158.2" x2="209.08" y2="158.2" stroke="#9c10bc" stroke-width="1.05"/>
<line x1="211.82" y1="152.5" x2="211.82" y2="212.5" stroke="#9c10bc" stroke-width="1.25"/>
<line x1="210.22" y1="158.2" x2="211.82" y2="158.2" stroke="#9c10bc" stroke-width="1.05"/>
<line x1="211.82" y1="205.0" x2="213.42" y2="205.0" stroke="#9c10bc" stroke-width="1.05"/>
<line x1="216.16" y1="197.5" x2="216.16" y2="245.0" stroke="#9c10bc" stroke-width="1.25"/>
<line x1="214.56" y1="205.0" x2="216.16" y2="205.0" stroke="#9c10bc" stroke-width="1.05"/>
<line x1="216.16" y1="221.2" x2="217.76" y2="221.2" stroke="#9c10bc" stroke-width="1.05"/>
<line x1="220.50" y1="186.0" x2="220.50" y2="297.5" stroke="#9c10bc" stroke-width="1.25"/>
<line x1="218.90" y1="221.2" x2="220.50" y2="221.2" stroke="#9c10bc" stroke-width="1.05"/>
<line x1="220.50" y1="282.8" x2="222.10" y2="282.8" stroke="#9c10bc" stroke-width="1.05"/>
<line x1="224.84" y1="248.75" x2="224.84" y2="291.25" stroke="#109a9a" stroke-width="1.25"/>
<line x1="223.24" y1="282.8" x2="224.84" y2="282.8" stroke="#109a9a" stroke-width="1.05"/>
<line x1="224.84" y1="268.2" x2="226.44" y2="268.2" stroke="#109a9a" stroke-width="1.05"/>
<line x1="229.18" y1="262.5" x2="229.18" y2="306.0" stroke="#9c10bc" stroke-width="1.25"/>
<line x1="227.58" y1="268.2" x2="229.18" y2="268.2" stroke="#9c10bc" stroke-width="1.05"/>
<line x1="229.18" y1="286.5" x2="230.78" y2="286.5" stroke="#9c10bc" stroke-width="1.05"/>
<line x1="233.52" y1="230.0" x2="233.52" y2="292.5" stroke="#109a9a" stroke-width="1.25"/>
<line x1="231.92" y1="286.5" x2="233.52" y2="286.5" stroke="#109a9a" stroke-width="1.05"/>
<line x1="233.52" y1="255.6" x2="235.12" y2="255.6" stroke="#109a9a" stroke-width="1.05"/>
<line x1="237.86" y1="203.75" x2="237.86" y2="281.25" stroke="#109a9a" stroke-width="1.25"/>
<line x1="236.26" y1="255.6" x2="237.86" y2="255.6" stroke="#109a9a" stroke-width="1.05"/>
<line x1="237.86" y1="213.8" x2="239.46" y2="213.8" stroke="#109a9a" stroke-width="1.05"/>
<line x1="242.20" y1="190.4" x2="242.20" y2="253.75" stroke="#9c10bc" stroke-width="1.25"/>
<line x1="240.60" y1="213.8" x2="242.20" y2="213.8" stroke="#9c10bc" stroke-width="1.05"/>
<line x1="242.20" y1="234.1" x2="243.80" y2="234.1" stroke="#9c10bc" stroke-width="1.05"/>
<line x1="246.54" y1="115.0" x2="246.54" y2="245.0" stroke="#109a9a" stroke-width="1.25"/>
<line x1="244.94" y1="234.1" x2="246.54" y2="234.1" stroke="#109a9a" stroke-width="1.05"/>
<line x1="246.54" y1="133.8" x2="248.14" y2="133.8" stroke="#109a9a" stroke-width="1.05"/>
<line x1="250.88" y1="75.6" x2="250.88" y2="152.5" stroke="#109a9a" stroke-width="1.25"/>
<line x1="249.28" y1="133.8" x2="250.88" y2="133.8" stroke="#109a9a" stroke-width="1.05"/>
<line x1="250.88" y1="113.1" x2="252.48" y2="113.1" stroke="#109a9a" stroke-width="1.05"/>
<line x1="255.22" y1="107.0" x2="255.22" y2="137.5" stroke="#9c10bc" stroke-width="1.25"/>
<line x1="253.62" y1="113.1" x2="255.22" y2="113.1" stroke="#9c10bc" stroke-width="1.05"/>
<line x1="255.22" y1="130.0" x2="256.82" y2="130.0" stroke="#9c10bc" stroke-width="1.05"/>
<line x1="259.56" y1="122.5" x2="259.56" y2="167.5" stroke="#9c10bc" stroke-width="1.25"/>
<line x1="257.96" y1="130.0" x2="259.56" y2="130.0" stroke="#9c10bc" stroke-width="1.05"/>
<line x1="259.56" y1="136.2" x2="261.16" y2="136.2" stroke="#9c10bc" stroke-width="1.05"/>
<line x1="263.90" y1="121.0" x2="263.90" y2="150.0" stroke="#9c10bc" stroke-width="1.25"/>
<line x1="262.30" y1="136.2" x2="263.90" y2="136.2" stroke="#9c10bc" stroke-width="1.05"/>
<line x1="263.90" y1="147.5" x2="265.50" y2="147.5" stroke="#9c10bc" stroke-width="1.05"/>
<line x1="268.24" y1="137.5" x2="268.24" y2="157.5" stroke="#109a9a" stroke-width="1.25"/>
<line x1="266.64" y1="147.5" x2="268.24" y2="147.5" stroke="#109a9a" stroke-width="1.05"/>
<line x1="268.24" y1="145.0" x2="269.84" y2="145.0" stroke="#109a9a" stroke-width="1.05"/>
<line x1="272.58" y1="126.0" x2="272.58" y2="152.5" stroke="#109a9a" stroke-width="1.25"/>
<line x1="270.98" y1="145.0" x2="272.58" y2="145.0" stroke="#109a9a" stroke-width="1.05"/>
<line x1="272.58" y1="137.5" x2="274.18" y2="137.5" stroke="#109a9a" stroke-width="1.05"/>
<line x1="276.92" y1="133.75" x2="276.92" y2="157.0" stroke="#9c10bc" stroke-width="1.25"/>
<line x1="275.32" y1="137.5" x2="276.92" y2="137.5" stroke="#9c10bc" stroke-width="1.05"/>
<line x1="276.92" y1="137.4" x2="278.52" y2="137.4" stroke="#9c10bc" stroke-width="1.05"/>
<line x1="281.26" y1="127.5" x2="281.26" y2="141.0" stroke="#9c10bc" stroke-width="1.25"/>
<line x1="279.66" y1="137.4" x2="281.26" y2="137.4" stroke="#9c10bc" stroke-width="1.05"/>
<line x1="281.26" y1="138.0" x2="282.86" y2="138.0" stroke="#9c10bc" stroke-width="1.05"/>
<line x1="285.60" y1="135.0" x2="285.60" y2="170.0" stroke="#9c10bc" stroke-width="1.25"/>
<line x1="284.00" y1="138.0" x2="285.60" y2="138.0" stroke="#9c10bc" stroke-width="1.05"/>
<line x1="285.60" y1="166.0" x2="287.20" y2="166.0" stroke="#9c10bc" stroke-width="1.05"/>
<line x1="289.94" y1="162.0" x2="289.94" y2="200.0" stroke="#9c10bc" stroke-width="1.25"/>
<line x1="288.34" y1="166.0" x2="289.94" y2="166.0" stroke="#9c10bc" stroke-width="1.05"/>
<line x1="289.94" y1="194.8" x2="291.54" y2="194.8" stroke="#9c10bc" stroke-width="1.05"/>
<line x1="294.28" y1="174.0" x2="294.28" y2="200.0" stroke="#109a9a" stroke-width="1.25"/>
<line x1="292.68" y1="194.8" x2="294.28" y2="194.8" stroke="#109a9a" stroke-width="1.05"/>
<line x1="294.28" y1="187.0" x2="295.88" y2="187.0" stroke="#109a9a" stroke-width="1.05"/>
<line x1="298.62" y1="184.0" x2="298.62" y2="199.0" stroke="#9c10bc" stroke-width="1.25"/>
<line x1="297.02" y1="187.0" x2="298.62" y2="187.0" stroke="#9c10bc" stroke-width="1.05"/>
<line x1="298.62" y1="192.5" x2="300.22" y2="192.5" stroke="#9c10bc" stroke-width="1.05"/>
<line x1="302.96" y1="186.0" x2="302.96" y2="221.0" stroke="#9c10bc" stroke-width="1.25"/>
<line x1="301.36" y1="192.5" x2="302.96" y2="192.5" stroke="#9c10bc" stroke-width="1.05"/>
<line x1="302.96" y1="212.5" x2="304.56" y2="212.5" stroke="#9c10bc" stroke-width="1.05"/>
<line x1="307.30" y1="204.0" x2="307.30" y2="223.75" stroke="#9c10bc" stroke-width="1.25"/>
<line x1="305.70" y1="212.5" x2="307.30" y2="212.5" stroke="#9c10bc" stroke-width="1.05"/>
<line x1="307.30" y1="219.8" x2="308.90" y2="219.8" stroke="#9c10bc" stroke-width="1.05"/>
<line x1="311.64" y1="200.0" x2="311.64" y2="226.0" stroke="#109a9a" stroke-width="1.25"/>
<line x1="310.04" y1="219.8" x2="311.64" y2="219.8" stroke="#109a9a" stroke-width="1.05"/>
<line x1="311.64" y1="212.5" x2="313.24" y2="212.5" stroke="#109a9a" stroke-width="1.05"/>
<line x1="315.98" y1="186.0" x2="315.98" y2="225.0" stroke="#109a9a" stroke-width="1.25"/>
<line x1="314.38" y1="212.5" x2="315.98" y2="212.5" stroke="#109a9a" stroke-width="1.05"/>
<line x1="315.98" y1="200.5" x2="317.58" y2="200.5" stroke="#109a9a" stroke-width="1.05"/>
<line x1="320.32" y1="172.5" x2="320.32" y2="215.0" stroke="#109a9a" stroke-width="1.25"/>
<line x1="318.72" y1="200.5" x2="320.32" y2="200.5" stroke="#109a9a" stroke-width="1.05"/>
<line x1="320.32" y1="182.5" x2="321.92" y2="182.5" stroke="#109a9a" stroke-width="1.05"/>
<line x1="324.66" y1="140.0" x2="324.66" y2="192.5" stroke="#109a9a" stroke-width="1.25"/>
<line x1="323.06" y1="182.5" x2="324.66" y2="182.5" stroke="#109a9a" stroke-width="1.05"/>
<line x1="324.66" y1="153.5" x2="326.26" y2="153.5" stroke="#109a9a" stroke-width="1.05"/>
<line x1="329.00" y1="143.75" x2="329.00" y2="196.0" stroke="#9c10bc" stroke-width="1.25"/>
<line x1="327.40" y1="153.5" x2="329.00" y2="153.5" stroke="#9c10bc" stroke-width="1.05"/>
<line x1="329.00" y1="187.4" x2="330.60" y2="187.4" stroke="#9c10bc" stroke-width="1.05"/>
<line x1="333.34" y1="178.75" x2="333.34" y2="238.75" stroke="#9c10bc" stroke-width="1.25"/>
<line x1="331.74" y1="187.4" x2="333.34" y2="187.4" stroke="#9c10bc" stroke-width="1.05"/>
<line x1="333.34" y1="217.4" x2="334.94" y2="217.4" stroke="#9c10bc" stroke-width="1.05"/>
<line x1="337.68" y1="196.0" x2="337.68" y2="240.0" stroke="#9c10bc" stroke-width="1.25"/>
<line x1="336.08" y1="217.4" x2="337.68" y2="217.4" stroke="#9c10bc" stroke-width="1.05"/>
<line x1="337.68" y1="234.4" x2="339.28" y2="234.4" stroke="#9c10bc" stroke-width="1.05"/>
<line x1="342.02" y1="228.75" x2="342.02" y2="273.75" stroke="#9c10bc" stroke-width="1.25"/>
<line x1="340.42" y1="234.4" x2="342.02" y2="234.4" stroke="#9c10bc" stroke-width="1.05"/>
<line x1="342.02" y1="258.8" x2="343.62" y2="258.8" stroke="#9c10bc" stroke-width="1.05"/>
<line x1="346.36" y1="243.75" x2="346.36" y2="301.0" stroke="#9c10bc" stroke-width="1.25"/>
<line x1="344.76" y1="258.8" x2="346.36" y2="258.8" stroke="#9c10bc" stroke-width="1.05"/>
<line x1="346.36" y1="290.0" x2="347.96" y2="290.0" stroke="#9c10bc" stroke-width="1.05"/>
<line x1="350.70" y1="279.0" x2="350.70" y2="419.0" stroke="#9c10bc" stroke-width="1.25"/>
<line x1="349.10" y1="290.0" x2="350.70" y2="290.0" stroke="#9c10bc" stroke-width="1.05"/>
<line x1="350.70" y1="381.0" x2="352.30" y2="381.0" stroke="#9c10bc" stroke-width="1.05"/>
<line x1="355.04" y1="350.0" x2="355.04" y2="388.8" stroke="#109a9a" stroke-width="1.25"/>
<line x1="353.44" y1="381.0" x2="355.04" y2="381.0" stroke="#109a9a" stroke-width="1.05"/>
<line x1="355.04" y1="355.5" x2="356.64" y2="355.5" stroke="#109a9a" stroke-width="1.05"/>
<line x1="359.38" y1="327.8" x2="359.38" y2="377.5" stroke="#9c10bc" stroke-width="1.25"/>
<line x1="357.78" y1="355.5" x2="359.38" y2="355.5" stroke="#9c10bc" stroke-width="1.05"/>
<line x1="359.38" y1="370.0" x2="360.98" y2="370.0" stroke="#9c10bc" stroke-width="1.05"/>
<line x1="363.72" y1="340.0" x2="363.72" y2="380.0" stroke="#109a9a" stroke-width="1.25"/>
<line x1="362.12" y1="370.0" x2="363.72" y2="370.0" stroke="#109a9a" stroke-width="1.05"/>
<line x1="363.72" y1="344.3" x2="365.32" y2="344.3" stroke="#109a9a" stroke-width="1.05"/>
<line x1="368.06" y1="327.0" x2="368.06" y2="361.6" stroke="#9c10bc" stroke-width="1.25"/>
<line x1="366.46" y1="344.3" x2="368.06" y2="344.3" stroke="#9c10bc" stroke-width="1.05"/>
<line x1="368.06" y1="356.3" x2="369.66" y2="356.3" stroke="#9c10bc" stroke-width="1.05"/>
<line x1="372.40" y1="335.3" x2="372.40" y2="366.3" stroke="#109a9a" stroke-width="1.25"/>
<line x1="370.80" y1="356.3" x2="372.40" y2="356.3" stroke="#109a9a" stroke-width="1.05"/>
<line x1="372.40" y1="357.2" x2="374.00" y2="357.2" stroke="#109a9a" stroke-width="1.05"/>
<line x1="376.74" y1="352.0" x2="376.74" y2="362.5" stroke="#109a9a" stroke-width="1.25"/>
<line x1="375.14" y1="357.2" x2="376.74" y2="357.2" stroke="#109a9a" stroke-width="1.05"/>
<line x1="376.74" y1="357.8" x2="378.34" y2="357.8" stroke="#109a9a" stroke-width="1.05"/>
<line x1="381.08" y1="353.0" x2="381.08" y2="368.0" stroke="#109a9a" stroke-width="1.25"/>
<line x1="379.48" y1="357.8" x2="381.08" y2="357.8" stroke="#109a9a" stroke-width="1.05"/>
<line x1="381.08" y1="355.3" x2="382.68" y2="355.3" stroke="#109a9a" stroke-width="1.05"/>
<line x1="385.42" y1="351.3" x2="385.42" y2="364.4" stroke="#9c10bc" stroke-width="1.25"/>
<line x1="383.82" y1="355.3" x2="385.42" y2="355.3" stroke="#9c10bc" stroke-width="1.05"/>
<line x1="385.42" y1="359.1" x2="387.02" y2="359.1" stroke="#9c10bc" stroke-width="1.05"/>
<line x1="389.76" y1="342.0" x2="389.76" y2="361.0" stroke="#109a9a" stroke-width="1.25"/>
<line x1="388.16" y1="359.1" x2="389.76" y2="359.1" stroke="#109a9a" stroke-width="1.05"/>
<line x1="389.76" y1="345.5" x2="391.36" y2="345.5" stroke="#109a9a" stroke-width="1.05"/>
<line x1="394.10" y1="330.0" x2="394.10" y2="349.0" stroke="#109a9a" stroke-width="1.25"/>
<line x1="392.50" y1="345.5" x2="394.10" y2="345.5" stroke="#109a9a" stroke-width="1.05"/>
<line x1="394.10" y1="333.8" x2="395.70" y2="333.8" stroke="#109a9a" stroke-width="1.05"/>
<line x1="398.44" y1="322.5" x2="398.44" y2="337.5" stroke="#109a9a" stroke-width="1.25"/>
<line x1="396.84" y1="333.8" x2="398.44" y2="333.8" stroke="#109a9a" stroke-width="1.05"/>
<line x1="398.44" y1="330.0" x2="400.04" y2="330.0" stroke="#109a9a" stroke-width="1.05"/>
<line x1="402.78" y1="322.5" x2="402.78" y2="344.0" stroke="#109a9a" stroke-width="1.25"/>
<line x1="401.18" y1="330.0" x2="402.78" y2="330.0" stroke="#109a9a" stroke-width="1.05"/>
<line x1="402.78" y1="328.1" x2="404.38" y2="328.1" stroke="#109a9a" stroke-width="1.05"/>
<line x1="407.12" y1="323.75" x2="407.12" y2="332.5" stroke="#109a9a" stroke-width="1.25"/>
<line x1="405.52" y1="328.1" x2="407.12" y2="328.1" stroke="#109a9a" stroke-width="1.05"/>
<line x1="407.12" y1="328.1" x2="408.72" y2="328.1" stroke="#109a9a" stroke-width="1.05"/>
<line x1="411.46" y1="312.5" x2="411.46" y2="332.5" stroke="#109a9a" stroke-width="1.25"/>
<line x1="409.86" y1="328.1" x2="411.46" y2="328.1" stroke="#109a9a" stroke-width="1.05"/>
<line x1="411.46" y1="313.2" x2="413.06" y2="313.2" stroke="#109a9a" stroke-width="1.05"/>
<line x1="415.80" y1="295.0" x2="415.80" y2="314.0" stroke="#109a9a" stroke-width="1.25"/>
<line x1="414.20" y1="313.2" x2="415.80" y2="313.2" stroke="#109a9a" stroke-width="1.05"/>
<line x1="415.80" y1="304.5" x2="417.40" y2="304.5" stroke="#109a9a" stroke-width="1.05"/>
<line x1="420.14" y1="287.5" x2="420.14" y2="319.0" stroke="#109a9a" stroke-width="1.25"/>
<line x1="418.54" y1="304.5" x2="420.14" y2="304.5" stroke="#109a9a" stroke-width="1.05"/>
<line x1="420.14" y1="294.8" x2="421.74" y2="294.8" stroke="#109a9a" stroke-width="1.05"/>
<line x1="424.48" y1="251.5" x2="424.48" y2="302.0" stroke="#109a9a" stroke-width="1.25"/>
<line x1="422.88" y1="294.8" x2="424.48" y2="294.8" stroke="#109a9a" stroke-width="1.05"/>
<line x1="424.48" y1="271.6" x2="426.08" y2="271.6" stroke="#109a9a" stroke-width="1.05"/>
<line x1="428.82" y1="264.0" x2="428.82" y2="302.5" stroke="#9c10bc" stroke-width="1.25"/>
<line x1="427.22" y1="271.6" x2="428.82" y2="271.6" stroke="#9c10bc" stroke-width="1.05"/>
<line x1="428.82" y1="294.8" x2="430.42" y2="294.8" stroke="#9c10bc" stroke-width="1.05"/>
<line x1="433.16" y1="215.0" x2="433.16" y2="310.8" stroke="#109a9a" stroke-width="1.25"/>
<line x1="431.56" y1="294.8" x2="433.16" y2="294.8" stroke="#109a9a" stroke-width="1.05"/>
<line x1="433.16" y1="223.2" x2="434.76" y2="223.2" stroke="#109a9a" stroke-width="1.05"/>
<line x1="437.50" y1="205.0" x2="437.50" y2="255.8" stroke="#9c10bc" stroke-width="1.25"/>
<line x1="435.90" y1="223.2" x2="437.50" y2="223.2" stroke="#9c10bc" stroke-width="1.05"/>
<line x1="437.50" y1="245.4" x2="439.10" y2="245.4" stroke="#9c10bc" stroke-width="1.05"/>
<line x1="441.84" y1="235.0" x2="441.84" y2="275.0" stroke="#9c10bc" stroke-width="1.25"/>
<line x1="440.24" y1="245.4" x2="441.84" y2="245.4" stroke="#9c10bc" stroke-width="1.05"/>
<line x1="441.84" y1="267.0" x2="443.44" y2="267.0" stroke="#9c10bc" stroke-width="1.05"/>
<line x1="446.18" y1="180.0" x2="446.18" y2="285.8" stroke="#109a9a" stroke-width="1.25"/>
<line x1="444.58" y1="267.0" x2="446.18" y2="267.0" stroke="#109a9a" stroke-width="1.05"/>
<line x1="446.18" y1="217.0" x2="447.78" y2="217.0" stroke="#109a9a" stroke-width="1.05"/>
<line x1="450.52" y1="207.5" x2="450.52" y2="255.0" stroke="#9c10bc" stroke-width="1.25"/>
<line x1="448.92" y1="217.0" x2="450.52" y2="217.0" stroke="#9c10bc" stroke-width="1.05"/>
<line x1="450.52" y1="245.5" x2="452.12" y2="245.5" stroke="#9c10bc" stroke-width="1.05"/>
<line x1="454.86" y1="179.0" x2="454.86" y2="265.0" stroke="#109a9a" stroke-width="1.25"/>
<line x1="453.26" y1="245.5" x2="454.86" y2="245.5" stroke="#109a9a" stroke-width="1.05"/>
<line x1="454.86" y1="193.0" x2="456.46" y2="193.0" stroke="#109a9a" stroke-width="1.05"/>
<line x1="459.20" y1="171.5" x2="459.20" y2="207.0" stroke="#109a9a" stroke-width="1.25"/>
<line x1="457.60" y1="193.0" x2="459.20" y2="193.0" stroke="#109a9a" stroke-width="1.05"/>
<line x1="459.20" y1="184.2" x2="460.80" y2="184.2" stroke="#109a9a" stroke-width="1.05"/>
<line x1="463.54" y1="178.5" x2="463.54" y2="323.75" stroke="#9c10bc" stroke-width="1.25"/>
<line x1="461.94" y1="184.2" x2="463.54" y2="184.2" stroke="#9c10bc" stroke-width="1.05"/>
<line x1="463.54" y1="311.9" x2="465.14" y2="311.9" stroke="#9c10bc" stroke-width="1.05"/>
<line x1="467.88" y1="300.0" x2="467.88" y2="356.0" stroke="#9c10bc" stroke-width="1.25"/>
<line x1="466.28" y1="311.9" x2="467.88" y2="311.9" stroke="#9c10bc" stroke-width="1.05"/>
<line x1="467.88" y1="328.0" x2="469.48" y2="328.0" stroke="#9c10bc" stroke-width="1.05"/>
<line x1="472.22" y1="310.0" x2="472.22" y2="332.5" stroke="#109a9a" stroke-width="1.25"/>
<line x1="470.62" y1="328.0" x2="472.22" y2="328.0" stroke="#109a9a" stroke-width="1.05"/>
<line x1="472.22" y1="315.3" x2="473.82" y2="315.3" stroke="#109a9a" stroke-width="1.05"/>
<line x1="476.56" y1="311.0" x2="476.56" y2="360.0" stroke="#9c10bc" stroke-width="1.25"/>
<line x1="474.96" y1="315.3" x2="476.56" y2="315.3" stroke="#9c10bc" stroke-width="1.05"/>
<line x1="476.56" y1="341.2" x2="478.16" y2="341.2" stroke="#9c10bc" stroke-width="1.05"/>
<line x1="480.90" y1="326.0" x2="480.90" y2="345.0" stroke="#109a9a" stroke-width="1.25"/>
<line x1="479.30" y1="341.2" x2="480.90" y2="341.2" stroke="#109a9a" stroke-width="1.05"/>
<line x1="480.90" y1="331.7" x2="482.50" y2="331.7" stroke="#109a9a" stroke-width="1.05"/>
<path d="M488.8 56.1 L493.8 56.1 L491.3 59.2 Z" fill="#a2aac0"/>
<line x1="614.45" y1="67.5" x2="616.45" y2="67.5" stroke="#1cc4c4" stroke-width="1"/>
<text x="617.5" y="70.2" font-family="'Liberation Sans', sans-serif" font-size="7.4" fill="#1cc4c4" font-weight="normal" text-anchor="start" textLength="17.6" lengthAdjust="spacingAndGlyphs"  stroke="#1cc4c4" stroke-width="0.3">1.00830</text>
<line x1="614.45" y1="90.78" x2="616.45" y2="90.78" stroke="#1cc4c4" stroke-width="1"/>
<text x="617.5" y="93.48" font-family="'Liberation Sans', sans-serif" font-size="7.4" fill="#1cc4c4" font-weight="normal" text-anchor="start" textLength="17.6" lengthAdjust="spacingAndGlyphs"  stroke="#1cc4c4" stroke-width="0.3">1.00720</text>
<line x1="614.45" y1="114.06" x2="616.45" y2="114.06" stroke="#1cc4c4" stroke-width="1"/>
<text x="617.5" y="116.76" font-family="'Liberation Sans', sans-serif" font-size="7.4" fill="#1cc4c4" font-weight="normal" text-anchor="start" textLength="17.6" lengthAdjust="spacingAndGlyphs"  stroke="#1cc4c4" stroke-width="0.3">1.00610</text>
<line x1="614.45" y1="137.34" x2="616.45" y2="137.34" stroke="#1cc4c4" stroke-width="1"/>
<text x="617.5" y="140.04" font-family="'Liberation Sans', sans-serif" font-size="7.4" fill="#1cc4c4" font-weight="normal" text-anchor="start" textLength="17.6" lengthAdjust="spacingAndGlyphs"  stroke="#1cc4c4" stroke-width="0.3">1.00500</text>
<line x1="614.45" y1="160.62" x2="616.45" y2="160.62" stroke="#1cc4c4" stroke-width="1"/>
<text x="617.5" y="163.32" font-family="'Liberation Sans', sans-serif" font-size="7.4" fill="#1cc4c4" font-weight="normal" text-anchor="start" textLength="17.6" lengthAdjust="spacingAndGlyphs"  stroke="#1cc4c4" stroke-width="0.3">1.00390</text>
<line x1="614.45" y1="183.9" x2="616.45" y2="183.9" stroke="#1cc4c4" stroke-width="1"/>
<text x="617.5" y="186.6" font-family="'Liberation Sans', sans-serif" font-size="7.4" fill="#1cc4c4" font-weight="normal" text-anchor="start" textLength="17.6" lengthAdjust="spacingAndGlyphs"  stroke="#1cc4c4" stroke-width="0.3">1.00280</text>
<line x1="614.45" y1="207.18" x2="616.45" y2="207.18" stroke="#1cc4c4" stroke-width="1"/>
<text x="617.5" y="209.88" font-family="'Liberation Sans', sans-serif" font-size="7.4" fill="#1cc4c4" font-weight="normal" text-anchor="start" textLength="17.6" lengthAdjust="spacingAndGlyphs"  stroke="#1cc4c4" stroke-width="0.3">1.00170</text>
<line x1="614.45" y1="230.46" x2="616.45" y2="230.46" stroke="#1cc4c4" stroke-width="1"/>
<text x="617.5" y="233.16" font-family="'Liberation Sans', sans-serif" font-size="7.4" fill="#1cc4c4" font-weight="normal" text-anchor="start" textLength="17.6" lengthAdjust="spacingAndGlyphs"  stroke="#1cc4c4" stroke-width="0.3">1.00060</text>
<line x1="614.45" y1="253.74" x2="616.45" y2="253.74" stroke="#1cc4c4" stroke-width="1"/>
<text x="617.5" y="256.44" font-family="'Liberation Sans', sans-serif" font-size="7.4" fill="#1cc4c4" font-weight="normal" text-anchor="start" textLength="17.6" lengthAdjust="spacingAndGlyphs"  stroke="#1cc4c4" stroke-width="0.3">0.99950</text>
<line x1="614.45" y1="277.02" x2="616.45" y2="277.02" stroke="#1cc4c4" stroke-width="1"/>
<text x="617.5" y="279.71999999999997" font-family="'Liberation Sans', sans-serif" font-size="7.4" fill="#1cc4c4" font-weight="normal" text-anchor="start" textLength="17.6" lengthAdjust="spacingAndGlyphs"  stroke="#1cc4c4" stroke-width="0.3">0.99840</text>
<line x1="614.45" y1="300.3" x2="616.45" y2="300.3" stroke="#1cc4c4" stroke-width="1"/>
<text x="617.5" y="303.0" font-family="'Liberation Sans', sans-serif" font-size="7.4" fill="#1cc4c4" font-weight="normal" text-anchor="start" textLength="17.6" lengthAdjust="spacingAndGlyphs"  stroke="#1cc4c4" stroke-width="0.3">0.99730</text>
<line x1="614.45" y1="323.58000000000004" x2="616.45" y2="323.58000000000004" stroke="#1cc4c4" stroke-width="1"/>
<text x="617.5" y="326.28000000000003" font-family="'Liberation Sans', sans-serif" font-size="7.4" fill="#1cc4c4" font-weight="normal" text-anchor="start" textLength="17.6" lengthAdjust="spacingAndGlyphs"  stroke="#1cc4c4" stroke-width="0.3">0.99620</text>
<line x1="614.45" y1="346.86" x2="616.45" y2="346.86" stroke="#1cc4c4" stroke-width="1"/>
<text x="617.5" y="349.56" font-family="'Liberation Sans', sans-serif" font-size="7.4" fill="#1cc4c4" font-weight="normal" text-anchor="start" textLength="17.6" lengthAdjust="spacingAndGlyphs"  stroke="#1cc4c4" stroke-width="0.3">0.99510</text>
<line x1="614.45" y1="370.14" x2="616.45" y2="370.14" stroke="#1cc4c4" stroke-width="1"/>
<text x="617.5" y="372.84" font-family="'Liberation Sans', sans-serif" font-size="7.4" fill="#1cc4c4" font-weight="normal" text-anchor="start" textLength="17.6" lengthAdjust="spacingAndGlyphs"  stroke="#1cc4c4" stroke-width="0.3">0.99400</text>
<line x1="614.45" y1="393.42" x2="616.45" y2="393.42" stroke="#1cc4c4" stroke-width="1"/>
<text x="617.5" y="396.12" font-family="'Liberation Sans', sans-serif" font-size="7.4" fill="#1cc4c4" font-weight="normal" text-anchor="start" textLength="17.6" lengthAdjust="spacingAndGlyphs"  stroke="#1cc4c4" stroke-width="0.3">0.99290</text>
<line x1="614.45" y1="416.70000000000005" x2="616.45" y2="416.70000000000005" stroke="#1cc4c4" stroke-width="1"/>
<text x="617.5" y="419.40000000000003" font-family="'Liberation Sans', sans-serif" font-size="7.4" fill="#1cc4c4" font-weight="normal" text-anchor="start" textLength="17.6" lengthAdjust="spacingAndGlyphs"  stroke="#1cc4c4" stroke-width="0.3">0.99180</text>
<line x1="614.45" y1="439.98" x2="616.45" y2="439.98" stroke="#1cc4c4" stroke-width="1"/>
<text x="617.5" y="442.68" font-family="'Liberation Sans', sans-serif" font-size="7.4" fill="#1cc4c4" font-weight="normal" text-anchor="start" textLength="17.6" lengthAdjust="spacingAndGlyphs"  stroke="#1cc4c4" stroke-width="0.3">0.99070</text>
<rect x="614.7" y="331.9" width="22.5" height="7.8" fill="#00f0f0"/>
<text x="617.5" y="338.1" font-family="'Liberation Sans', sans-serif" font-size="7.4" fill="#000000" font-weight="normal" text-anchor="start" textLength="17.6" lengthAdjust="spacingAndGlyphs"  stroke="#000000" stroke-width="0.2">0.99564</text>
<line x1="3.2" y1="443.2" x2="3.2" y2="445.2" stroke="#1cc4c4" stroke-width="1"/>
<text x="3.2" y="452.4" font-family="'Liberation Sans', sans-serif" font-size="7.6" fill="#1cc4c4" font-weight="normal" text-anchor="start" textLength="28" lengthAdjust="spacingAndGlyphs"  stroke="#1cc4c4" stroke-width="0.3">29 Aug 2022</text>
<line x1="37.92" y1="443.2" x2="37.92" y2="445.2" stroke="#1cc4c4" stroke-width="1"/>
<text x="37.92" y="452.4" font-family="'Liberation Sans', sans-serif" font-size="7.6" fill="#1cc4c4" font-weight="normal" text-anchor="start" textLength="30.3" lengthAdjust="spacingAndGlyphs"  stroke="#1cc4c4" stroke-width="0.3">29 Aug 17:00</text>
<line x1="72.64" y1="443.2" x2="72.64" y2="445.2" stroke="#1cc4c4" stroke-width="1"/>
<text x="72.64" y="452.4" font-family="'Liberation Sans', sans-serif" font-size="7.6" fill="#1cc4c4" font-weight="normal" text-anchor="start" textLength="30.3" lengthAdjust="spacingAndGlyphs"  stroke="#1cc4c4" stroke-width="0.3">30 Aug 01:00</text>
<line x1="107.36" y1="443.2" x2="107.36" y2="445.2" stroke="#1cc4c4" stroke-width="1"/>
<text x="107.36" y="452.4" font-family="'Liberation Sans', sans-serif" font-size="7.6" fill="#1cc4c4" font-weight="normal" text-anchor="start" textLength="30.3" lengthAdjust="spacingAndGlyphs"  stroke="#1cc4c4" stroke-width="0.3">30 Aug 09:00</text>
<line x1="142.07999999999998" y1="443.2" x2="142.07999999999998" y2="445.2" stroke="#1cc4c4" stroke-width="1"/>
<text x="142.07999999999998" y="452.4" font-family="'Liberation Sans', sans-serif" font-size="7.6" fill="#1cc4c4" font-weight="normal" text-anchor="start" textLength="30.3" lengthAdjust="spacingAndGlyphs"  stroke="#1cc4c4" stroke-width="0.3">30 Aug 17:00</text>
<line x1="176.79999999999998" y1="443.2" x2="176.79999999999998" y2="445.2" stroke="#1cc4c4" stroke-width="1"/>
<text x="176.79999999999998" y="452.4" font-family="'Liberation Sans', sans-serif" font-size="7.6" fill="#1cc4c4" font-weight="normal" text-anchor="start" textLength="30.3" lengthAdjust="spacingAndGlyphs"  stroke="#1cc4c4" stroke-width="0.3">31 Aug 01:00</text>
<line x1="211.51999999999998" y1="443.2" x2="211.51999999999998" y2="445.2" stroke="#1cc4c4" stroke-width="1"/>
<text x="211.51999999999998" y="452.4" font-family="'Liberation Sans', sans-serif" font-size="7.6" fill="#1cc4c4" font-weight="normal" text-anchor="start" textLength="30.3" lengthAdjust="spacingAndGlyphs"  stroke="#1cc4c4" stroke-width="0.3">31 Aug 09:00</text>
<line x1="246.23999999999998" y1="443.2" x2="246.23999999999998" y2="445.2" stroke="#1cc4c4" stroke-width="1"/>
<text x="246.23999999999998" y="452.4" font-family="'Liberation Sans', sans-serif" font-size="7.6" fill="#1cc4c4" font-weight="normal" text-anchor="start" textLength="30.3" lengthAdjust="spacingAndGlyphs"  stroke="#1cc4c4" stroke-width="0.3">31 Aug 17:00</text>
<line x1="280.96" y1="443.2" x2="280.96" y2="445.2" stroke="#1cc4c4" stroke-width="1"/>
<text x="280.96" y="452.4" font-family="'Liberation Sans', sans-serif" font-size="7.6" fill="#1cc4c4" font-weight="normal" text-anchor="start" textLength="27.3" lengthAdjust="spacingAndGlyphs"  stroke="#1cc4c4" stroke-width="0.3">1 Sep 01:00</text>
<line x1="315.68" y1="443.2" x2="315.68" y2="445.2" stroke="#1cc4c4" stroke-width="1"/>
<text x="315.68" y="452.4" font-family="'Liberation Sans', sans-serif" font-size="7.6" fill="#1cc4c4" font-weight="normal" text-anchor="start" textLength="27.3" lengthAdjust="spacingAndGlyphs"  stroke="#1cc4c4" stroke-width="0.3">1 Sep 09:00</text>
<line x1="350.4" y1="443.2" x2="350.4" y2="445.2" stroke="#1cc4c4" stroke-width="1"/>
<text x="350.4" y="452.4" font-family="'Liberation Sans', sans-serif" font-size="7.6" fill="#1cc4c4" font-weight="normal" text-anchor="start" textLength="27.3" lengthAdjust="spacingAndGlyphs"  stroke="#1cc4c4" stroke-width="0.3">1 Sep 17:00</text>
<line x1="385.11999999999995" y1="443.2" x2="385.11999999999995" y2="445.2" stroke="#1cc4c4" stroke-width="1"/>
<text x="385.11999999999995" y="452.4" font-family="'Liberation Sans', sans-serif" font-size="7.6" fill="#1cc4c4" font-weight="normal" text-anchor="start" textLength="27.3" lengthAdjust="spacingAndGlyphs"  stroke="#1cc4c4" stroke-width="0.3">2 Sep 01:00</text>
<line x1="419.84" y1="443.2" x2="419.84" y2="445.2" stroke="#1cc4c4" stroke-width="1"/>
<text x="419.84" y="452.4" font-family="'Liberation Sans', sans-serif" font-size="7.6" fill="#1cc4c4" font-weight="normal" text-anchor="start" textLength="27.3" lengthAdjust="spacingAndGlyphs"  stroke="#1cc4c4" stroke-width="0.3">2 Sep 09:00</text>
<line x1="454.56" y1="443.2" x2="454.56" y2="445.2" stroke="#1cc4c4" stroke-width="1"/>
<text x="454.56" y="452.4" font-family="'Liberation Sans', sans-serif" font-size="7.6" fill="#1cc4c4" font-weight="normal" text-anchor="start" textLength="27.3" lengthAdjust="spacingAndGlyphs"  stroke="#1cc4c4" stroke-width="0.3">2 Sep 17:00</text>
<rect x="17.90" y="243.00" width="6.6" height="30.10" fill="#d8d4c0" opacity="0.15"/>
<path d="M21.20 245.30 L24.00 243.10 L24.00 247.50 Z" fill="#f2ae10" stroke="#fff2c8" stroke-width="0.6" stroke-linejoin="round"/>
<path d="M21.20 249.70 L24.00 247.50 L24.00 251.90 Z" fill="#f2ae10" stroke="#fff2c8" stroke-width="0.6" stroke-linejoin="round"/>
<path d="M21.20 254.00 L24.00 251.80 L24.00 256.20 Z" fill="#f2ae10" stroke="#fff2c8" stroke-width="0.6" stroke-linejoin="round"/>
<path d="M21.20 262.80 L24.00 260.60 L24.00 265.00 Z" fill="#f2ae10" stroke="#fff2c8" stroke-width="0.6" stroke-linejoin="round"/>
<path d="M21.20 266.40 L24.00 264.20 L24.00 268.60 Z" fill="#f2ae10" stroke="#fff2c8" stroke-width="0.6" stroke-linejoin="round"/>
<path d="M21.20 270.80 L24.00 268.60 L24.00 273.00 Z" fill="#f2ae10" stroke="#fff2c8" stroke-width="0.6" stroke-linejoin="round"/>
<path d="M17.40 245.30 L19.80 242.70 L20.00 244.10 L21.30 244.10 L21.30 246.50 L20.00 246.50 L19.80 247.90 Z" fill="#0c0cff" stroke="#f4f4ff" stroke-width="0.5" stroke-linejoin="round"/>
<path d="M17.40 249.70 L19.80 247.10 L20.00 248.50 L21.30 248.50 L21.30 250.90 L20.00 250.90 L19.80 252.30 Z" fill="#0c0cff" stroke="#f4f4ff" stroke-width="0.5" stroke-linejoin="round"/>
<path d="M17.40 254.00 L19.80 251.40 L20.00 252.80 L21.30 252.80 L21.30 255.20 L20.00 255.20 L19.80 256.60 Z" fill="#0c0cff" stroke="#f4f4ff" stroke-width="0.5" stroke-linejoin="round"/>
<path d="M17.40 262.80 L19.80 260.20 L20.00 261.60 L21.30 261.60 L21.30 264.00 L20.00 264.00 L19.80 265.40 Z" fill="#ff0c0c" stroke="#f4f4ff" stroke-width="0.5" stroke-linejoin="round"/>
<path d="M17.40 266.40 L19.80 263.80 L20.00 265.20 L21.30 265.20 L21.30 267.60 L20.00 267.60 L19.80 269.00 Z" fill="#ff0c0c" stroke="#f4f4ff" stroke-width="0.5" stroke-linejoin="round"/>
<path d="M17.40 270.80 L19.80 268.20 L20.00 269.60 L21.30 269.60 L21.30 272.00 L20.00 272.00 L19.80 273.40 Z" fill="#ff0c0c" stroke="#f4f4ff" stroke-width="0.5" stroke-linejoin="round"/>
<path d="M26.30 254.80 L29.10 252.60 L29.10 257.00 Z" fill="#f2ae10" stroke="#fff2c8" stroke-width="0.6" stroke-linejoin="round"/>
<path d="M22.00 275.50 L24.80 273.30 L24.80 277.70 Z" fill="#f2ae10" stroke="#fff2c8" stroke-width="0.6" stroke-linejoin="round"/>
<rect x="26.20" y="169.60" width="6.6" height="30.20" fill="#d8d4c0" opacity="0.15"/>
<path d="M29.50 171.90 L32.30 169.70 L32.30 174.10 Z" fill="#f2ae10" stroke="#fff2c8" stroke-width="0.6" stroke-linejoin="round"/>
<path d="M29.50 176.25 L32.30 174.05 L32.30 178.45 Z" fill="#f2ae10" stroke="#fff2c8" stroke-width="0.6" stroke-linejoin="round"/>
<path d="M29.50 180.50 L32.30 178.30 L32.30 182.70 Z" fill="#f2ae10" stroke="#fff2c8" stroke-width="0.6" stroke-linejoin="round"/>
<path d="M29.50 188.75 L32.30 186.55 L32.30 190.95 Z" fill="#f2ae10" stroke="#fff2c8" stroke-width="0.6" stroke-linejoin="round"/>
<path d="M29.50 193.00 L32.30 190.80 L32.30 195.20 Z" fill="#f2ae10" stroke="#fff2c8" stroke-width="0.6" stroke-linejoin="round"/>
<path d="M29.50 197.50 L32.30 195.30 L32.30 199.70 Z" fill="#f2ae10" stroke="#fff2c8" stroke-width="0.6" stroke-linejoin="round"/>
<path d="M25.70 171.90 L28.10 169.30 L28.30 170.70 L29.60 170.70 L29.60 173.10 L28.30 173.10 L28.10 174.50 Z" fill="#0c0cff" stroke="#f4f4ff" stroke-width="0.5" stroke-linejoin="round"/>
<path d="M25.70 176.25 L28.10 173.65 L28.30 175.05 L29.60 175.05 L29.60 177.45 L28.30 177.45 L28.10 178.85 Z" fill="#0c0cff" stroke="#f4f4ff" stroke-width="0.5" stroke-linejoin="round"/>
<path d="M25.70 180.50 L28.10 177.90 L28.30 179.30 L29.60 179.30 L29.60 181.70 L28.30 181.70 L28.10 183.10 Z" fill="#0c0cff" stroke="#f4f4ff" stroke-width="0.5" stroke-linejoin="round"/>
<path d="M25.70 188.75 L28.10 186.15 L28.30 187.55 L29.60 187.55 L29.60 189.95 L28.30 189.95 L28.10 191.35 Z" fill="#ff0c0c" stroke="#f4f4ff" stroke-width="0.5" stroke-linejoin="round"/>
<path d="M25.70 193.00 L28.10 190.40 L28.30 191.80 L29.60 191.80 L29.60 194.20 L28.30 194.20 L28.10 195.60 Z" fill="#ff0c0c" stroke="#f4f4ff" stroke-width="0.5" stroke-linejoin="round"/>
<path d="M25.70 197.50 L28.10 194.90 L28.30 196.30 L29.60 196.30 L29.60 198.70 L28.30 198.70 L28.10 200.10 Z" fill="#ff0c0c" stroke="#f4f4ff" stroke-width="0.5" stroke-linejoin="round"/>
<path d="M30.70 205.20 L33.50 203.00 L33.50 207.40 Z" fill="#f2ae10" stroke="#fff2c8" stroke-width="0.6" stroke-linejoin="round"/>
<rect x="117.55" y="110.70" width="6.6" height="31.60" fill="#d8d4c0" opacity="0.15"/>
<path d="M120.85 113.00 L123.65 110.80 L123.65 115.20 Z" fill="#f2ae10" stroke="#fff2c8" stroke-width="0.6" stroke-linejoin="round"/>
<path d="M120.85 117.70 L123.65 115.50 L123.65 119.90 Z" fill="#f2ae10" stroke="#fff2c8" stroke-width="0.6" stroke-linejoin="round"/>
<path d="M120.85 122.40 L123.65 120.20 L123.65 124.60 Z" fill="#f2ae10" stroke="#fff2c8" stroke-width="0.6" stroke-linejoin="round"/>
<path d="M120.85 131.00 L123.65 128.80 L123.65 133.20 Z" fill="#f2ae10" stroke="#fff2c8" stroke-width="0.6" stroke-linejoin="round"/>
<path d="M120.85 135.50 L123.65 133.30 L123.65 137.70 Z" fill="#f2ae10" stroke="#fff2c8" stroke-width="0.6" stroke-linejoin="round"/>
<path d="M120.85 140.00 L123.65 137.80 L123.65 142.20 Z" fill="#f2ae10" stroke="#fff2c8" stroke-width="0.6" stroke-linejoin="round"/>
<path d="M117.05 113.00 L119.45 110.40 L119.65 111.80 L120.95 111.80 L120.95 114.20 L119.65 114.20 L119.45 115.60 Z" fill="#0c0cff" stroke="#f4f4ff" stroke-width="0.5" stroke-linejoin="round"/>
<path d="M117.05 117.70 L119.45 115.10 L119.65 116.50 L120.95 116.50 L120.95 118.90 L119.65 118.90 L119.45 120.30 Z" fill="#0c0cff" stroke="#f4f4ff" stroke-width="0.5" stroke-linejoin="round"/>
<path d="M117.05 122.40 L119.45 119.80 L119.65 121.20 L120.95 121.20 L120.95 123.60 L119.65 123.60 L119.45 125.00 Z" fill="#0c0cff" stroke="#f4f4ff" stroke-width="0.5" stroke-linejoin="round"/>
<path d="M117.05 131.00 L119.45 128.40 L119.65 129.80 L120.95 129.80 L120.95 132.20 L119.65 132.20 L119.45 133.60 Z" fill="#ff0c0c" stroke="#f4f4ff" stroke-width="0.5" stroke-linejoin="round"/>
<path d="M117.05 135.50 L119.45 132.90 L119.65 134.30 L120.95 134.30 L120.95 136.70 L119.65 136.70 L119.45 138.10 Z" fill="#ff0c0c" stroke="#f4f4ff" stroke-width="0.5" stroke-linejoin="round"/>
<path d="M117.05 140.00 L119.45 137.40 L119.65 138.80 L120.95 138.80 L120.95 141.20 L119.65 141.20 L119.45 142.60 Z" fill="#ff0c0c" stroke="#f4f4ff" stroke-width="0.5" stroke-linejoin="round"/>
<path d="M120.60 145.50 L123.40 143.30 L123.40 147.70 Z" fill="#f2ae10" stroke="#fff2c8" stroke-width="0.6" stroke-linejoin="round"/>
<rect x="134.30" y="140.20" width="6.6" height="30.10" fill="#d8d4c0" opacity="0.15"/>
<path d="M137.60 142.50 L140.40 140.30 L140.40 144.70 Z" fill="#f2ae10" stroke="#fff2c8" stroke-width="0.6" stroke-linejoin="round"/>
<path d="M137.60 146.70 L140.40 144.50 L140.40 148.90 Z" fill="#f2ae10" stroke="#fff2c8" stroke-width="0.6" stroke-linejoin="round"/>
<path d="M137.60 150.80 L140.40 148.60 L140.40 153.00 Z" fill="#f2ae10" stroke="#fff2c8" stroke-width="0.6" stroke-linejoin="round"/>
<path d="M137.60 159.00 L140.40 156.80 L140.40 161.20 Z" fill="#f2ae10" stroke="#fff2c8" stroke-width="0.6" stroke-linejoin="round"/>
<path d="M137.60 163.30 L140.40 161.10 L140.40 165.50 Z" fill="#f2ae10" stroke="#fff2c8" stroke-width="0.6" stroke-linejoin="round"/>
<path d="M137.60 168.00 L140.40 165.80 L140.40 170.20 Z" fill="#f2ae10" stroke="#fff2c8" stroke-width="0.6" stroke-linejoin="round"/>
<path d="M133.80 142.50 L136.20 139.90 L136.40 141.30 L137.70 141.30 L137.70 143.70 L136.40 143.70 L136.20 145.10 Z" fill="#0c0cff" stroke="#f4f4ff" stroke-width="0.5" stroke-linejoin="round"/>
<path d="M133.80 146.70 L136.20 144.10 L136.40 145.50 L137.70 145.50 L137.70 147.90 L136.40 147.90 L136.20 149.30 Z" fill="#0c0cff" stroke="#f4f4ff" stroke-width="0.5" stroke-linejoin="round"/>
<path d="M133.80 150.80 L136.20 148.20 L136.40 149.60 L137.70 149.60 L137.70 152.00 L136.40 152.00 L136.20 153.40 Z" fill="#0c0cff" stroke="#f4f4ff" stroke-width="0.5" stroke-linejoin="round"/>
<path d="M133.80 159.00 L136.20 156.40 L136.40 157.80 L137.70 157.80 L137.70 160.20 L136.40 160.20 L136.20 161.60 Z" fill="#ff0c0c" stroke="#f4f4ff" stroke-width="0.5" stroke-linejoin="round"/>
<path d="M133.80 163.30 L136.20 160.70 L136.40 162.10 L137.70 162.10 L137.70 164.50 L136.40 164.50 L136.20 165.90 Z" fill="#ff0c0c" stroke="#f4f4ff" stroke-width="0.5" stroke-linejoin="round"/>
<path d="M133.80 168.00 L136.20 165.40 L136.40 166.80 L137.70 166.80 L137.70 169.20 L136.40 169.20 L136.20 170.60 Z" fill="#ff0c0c" stroke="#f4f4ff" stroke-width="0.5" stroke-linejoin="round"/>
<path d="M138.60 178.80 L141.40 176.60 L141.40 181.00 Z" fill="#f2ae10" stroke="#fff2c8" stroke-width="0.6" stroke-linejoin="round"/>
<rect x="108.30" y="180.70" width="6.6" height="30.10" fill="#d8d4c0" opacity="0.15"/>
<path d="M111.60 183.00 L114.40 180.80 L114.40 185.20 Z" fill="#f2ae10" stroke="#fff2c8" stroke-width="0.6" stroke-linejoin="round"/>
<path d="M111.60 187.30 L114.40 185.10 L114.40 189.50 Z" fill="#f2ae10" stroke="#fff2c8" stroke-width="0.6" stroke-linejoin="round"/>
<path d="M111.60 191.80 L114.40 189.60 L114.40 194.00 Z" fill="#f2ae10" stroke="#fff2c8" stroke-width="0.6" stroke-linejoin="round"/>
<path d="M111.60 199.80 L114.40 197.60 L114.40 202.00 Z" fill="#f2ae10" stroke="#fff2c8" stroke-width="0.6" stroke-linejoin="round"/>
<path d="M111.60 204.00 L114.40 201.80 L114.40 206.20 Z" fill="#f2ae10" stroke="#fff2c8" stroke-width="0.6" stroke-linejoin="round"/>
<path d="M111.60 208.50 L114.40 206.30 L114.40 210.70 Z" fill="#f2ae10" stroke="#fff2c8" stroke-width="0.6" stroke-linejoin="round"/>
<path d="M107.80 183.00 L110.20 180.40 L110.40 181.80 L111.70 181.80 L111.70 184.20 L110.40 184.20 L110.20 185.60 Z" fill="#0c0cff" stroke="#f4f4ff" stroke-width="0.5" stroke-linejoin="round"/>
<path d="M107.80 187.30 L110.20 184.70 L110.40 186.10 L111.70 186.10 L111.70 188.50 L110.40 188.50 L110.20 189.90 Z" fill="#0c0cff" stroke="#f4f4ff" stroke-width="0.5" stroke-linejoin="round"/>
<path d="M107.80 191.80 L110.20 189.20 L110.40 190.60 L111.70 190.60 L111.70 193.00 L110.40 193.00 L110.20 194.40 Z" fill="#0c0cff" stroke="#f4f4ff" stroke-width="0.5" stroke-linejoin="round"/>
<path d="M107.80 199.80 L110.20 197.20 L110.40 198.60 L111.70 198.60 L111.70 201.00 L110.40 201.00 L110.20 202.40 Z" fill="#ff0c0c" stroke="#f4f4ff" stroke-width="0.5" stroke-linejoin="round"/>
<path d="M107.80 204.00 L110.20 201.40 L110.40 202.80 L111.70 202.80 L111.70 205.20 L110.40 205.20 L110.20 206.60 Z" fill="#ff0c0c" stroke="#f4f4ff" stroke-width="0.5" stroke-linejoin="round"/>
<path d="M107.80 208.50 L110.20 205.90 L110.40 207.30 L111.70 207.30 L111.70 209.70 L110.40 209.70 L110.20 211.10 Z" fill="#ff0c0c" stroke="#f4f4ff" stroke-width="0.5" stroke-linejoin="round"/>
<path d="M111.90 176.90 L114.70 174.70 L114.70 179.10 Z" fill="#f2ae10" stroke="#fff2c8" stroke-width="0.6" stroke-linejoin="round"/>
<rect x="143.05" y="182.90" width="6.6" height="32.70" fill="#d8d4c0" opacity="0.15"/>
<path d="M146.35 185.20 L149.15 183.00 L149.15 187.40 Z" fill="#f2ae10" stroke="#fff2c8" stroke-width="0.6" stroke-linejoin="round"/>
<path d="M146.35 190.40 L149.15 188.20 L149.15 192.60 Z" fill="#f2ae10" stroke="#fff2c8" stroke-width="0.6" stroke-linejoin="round"/>
<path d="M146.35 195.40 L149.15 193.20 L149.15 197.60 Z" fill="#f2ae10" stroke="#fff2c8" stroke-width="0.6" stroke-linejoin="round"/>
<path d="M146.35 203.00 L149.15 200.80 L149.15 205.20 Z" fill="#f2ae10" stroke="#fff2c8" stroke-width="0.6" stroke-linejoin="round"/>
<path d="M146.35 208.00 L149.15 205.80 L149.15 210.20 Z" fill="#f2ae10" stroke="#fff2c8" stroke-width="0.6" stroke-linejoin="round"/>
<path d="M146.35 213.30 L149.15 211.10 L149.15 215.50 Z" fill="#f2ae10" stroke="#fff2c8" stroke-width="0.6" stroke-linejoin="round"/>
<path d="M142.55 185.20 L144.95 182.60 L145.15 184.00 L146.45 184.00 L146.45 186.40 L145.15 186.40 L144.95 187.80 Z" fill="#0c0cff" stroke="#f4f4ff" stroke-width="0.5" stroke-linejoin="round"/>
<path d="M142.55 190.40 L144.95 187.80 L145.15 189.20 L146.45 189.20 L146.45 191.60 L145.15 191.60 L144.95 193.00 Z" fill="#0c0cff" stroke="#f4f4ff" stroke-width="0.5" stroke-linejoin="round"/>
<path d="M142.55 195.40 L144.95 192.80 L145.15 194.20 L146.45 194.20 L146.45 196.60 L145.15 196.60 L144.95 198.00 Z" fill="#0c0cff" stroke="#f4f4ff" stroke-width="0.5" stroke-linejoin="round"/>
<path d="M142.55 203.00 L144.95 200.40 L145.15 201.80 L146.45 201.80 L146.45 204.20 L145.15 204.20 L144.95 205.60 Z" fill="#ff0c0c" stroke="#f4f4ff" stroke-width="0.5" stroke-linejoin="round"/>
<path d="M142.55 208.00 L144.95 205.40 L145.15 206.80 L146.45 206.80 L146.45 209.20 L145.15 209.20 L144.95 210.60 Z" fill="#ff0c0c" stroke="#f4f4ff" stroke-width="0.5" stroke-linejoin="round"/>
<path d="M142.55 213.30 L144.95 210.70 L145.15 212.10 L146.45 212.10 L146.45 214.50 L145.15 214.50 L144.95 215.90 Z" fill="#ff0c0c" stroke="#f4f4ff" stroke-width="0.5" stroke-linejoin="round"/>
<rect x="139.30" y="231.70" width="6.6" height="29.80" fill="#d8d4c0" opacity="0.15"/>
<path d="M142.60 234.00 L145.40 231.80 L145.40 236.20 Z" fill="#f2ae10" stroke="#fff2c8" stroke-width="0.6" stroke-linejoin="round"/>
<path d="M142.60 238.50 L145.40 236.30 L145.40 240.70 Z" fill="#f2ae10" stroke="#fff2c8" stroke-width="0.6" stroke-linejoin="round"/>
<path d="M142.60 243.00 L145.40 240.80 L145.40 245.20 Z" fill="#f2ae10" stroke="#fff2c8" stroke-width="0.6" stroke-linejoin="round"/>
<path d="M142.60 250.80 L145.40 248.60 L145.40 253.00 Z" fill="#f2ae10" stroke="#fff2c8" stroke-width="0.6" stroke-linejoin="round"/>
<path d="M142.60 255.00 L145.40 252.80 L145.40 257.20 Z" fill="#f2ae10" stroke="#fff2c8" stroke-width="0.6" stroke-linejoin="round"/>
<path d="M142.60 259.20 L145.40 257.00 L145.40 261.40 Z" fill="#f2ae10" stroke="#fff2c8" stroke-width="0.6" stroke-linejoin="round"/>
<path d="M138.80 234.00 L141.20 231.40 L141.40 232.80 L142.70 232.80 L142.70 235.20 L141.40 235.20 L141.20 236.60 Z" fill="#0c0cff" stroke="#f4f4ff" stroke-width="0.5" stroke-linejoin="round"/>
<path d="M138.80 238.50 L141.20 235.90 L141.40 237.30 L142.70 237.30 L142.70 239.70 L141.40 239.70 L141.20 241.10 Z" fill="#0c0cff" stroke="#f4f4ff" stroke-width="0.5" stroke-linejoin="round"/>
<path d="M138.80 243.00 L141.20 240.40 L141.40 241.80 L142.70 241.80 L142.70 244.20 L141.40 244.20 L141.20 245.60 Z" fill="#0c0cff" stroke="#f4f4ff" stroke-width="0.5" stroke-linejoin="round"/>
<path d="M138.80 250.80 L141.20 248.20 L141.40 249.60 L142.70 249.60 L142.70 252.00 L141.40 252.00 L141.20 253.40 Z" fill="#ff0c0c" stroke="#f4f4ff" stroke-width="0.5" stroke-linejoin="round"/>
<path d="M138.80 255.00 L141.20 252.40 L141.40 253.80 L142.70 253.80 L142.70 256.20 L141.40 256.20 L141.20 257.60 Z" fill="#ff0c0c" stroke="#f4f4ff" stroke-width="0.5" stroke-linejoin="round"/>
<path d="M138.80 259.20 L141.20 256.60 L141.40 258.00 L142.70 258.00 L142.70 260.40 L141.40 260.40 L141.20 261.80 Z" fill="#ff0c0c" stroke="#f4f4ff" stroke-width="0.5" stroke-linejoin="round"/>
<path d="M142.90 225.00 L145.70 222.80 L145.70 227.20 Z" fill="#f2ae10" stroke="#fff2c8" stroke-width="0.6" stroke-linejoin="round"/>
<rect x="243.50" y="150.70" width="6.6" height="31.00" fill="#d8d4c0" opacity="0.15"/>
<path d="M246.80 153.00 L249.60 150.80 L249.60 155.20 Z" fill="#f2ae10" stroke="#fff2c8" stroke-width="0.6" stroke-linejoin="round"/>
<path d="M246.80 157.00 L249.60 154.80 L249.60 159.20 Z" fill="#f2ae10" stroke="#fff2c8" stroke-width="0.6" stroke-linejoin="round"/>
<path d="M246.80 161.25 L249.60 159.05 L249.60 163.45 Z" fill="#f2ae10" stroke="#fff2c8" stroke-width="0.6" stroke-linejoin="round"/>
<path d="M246.80 169.60 L249.60 167.40 L249.60 171.80 Z" fill="#f2ae10" stroke="#fff2c8" stroke-width="0.6" stroke-linejoin="round"/>
<path d="M246.80 174.80 L249.60 172.60 L249.60 177.00 Z" fill="#f2ae10" stroke="#fff2c8" stroke-width="0.6" stroke-linejoin="round"/>
<path d="M246.80 179.40 L249.60 177.20 L249.60 181.60 Z" fill="#f2ae10" stroke="#fff2c8" stroke-width="0.6" stroke-linejoin="round"/>
<path d="M243.00 153.00 L245.40 150.40 L245.60 151.80 L246.90 151.80 L246.90 154.20 L245.60 154.20 L245.40 155.60 Z" fill="#0c0cff" stroke="#f4f4ff" stroke-width="0.5" stroke-linejoin="round"/>
<path d="M243.00 157.00 L245.40 154.40 L245.60 155.80 L246.90 155.80 L246.90 158.20 L245.60 158.20 L245.40 159.60 Z" fill="#0c0cff" stroke="#f4f4ff" stroke-width="0.5" stroke-linejoin="round"/>
<path d="M243.00 161.25 L245.40 158.65 L245.60 160.05 L246.90 160.05 L246.90 162.45 L245.60 162.45 L245.40 163.85 Z" fill="#0c0cff" stroke="#f4f4ff" stroke-width="0.5" stroke-linejoin="round"/>
<path d="M243.00 169.60 L245.40 167.00 L245.60 168.40 L246.90 168.40 L246.90 170.80 L245.60 170.80 L245.40 172.20 Z" fill="#ff0c0c" stroke="#f4f4ff" stroke-width="0.5" stroke-linejoin="round"/>
<path d="M243.00 174.80 L245.40 172.20 L245.60 173.60 L246.90 173.60 L246.90 176.00 L245.60 176.00 L245.40 177.40 Z" fill="#ff0c0c" stroke="#f4f4ff" stroke-width="0.5" stroke-linejoin="round"/>
<path d="M243.00 179.40 L245.40 176.80 L245.60 178.20 L246.90 178.20 L246.90 180.60 L245.60 180.60 L245.40 182.00 Z" fill="#ff0c0c" stroke="#f4f4ff" stroke-width="0.5" stroke-linejoin="round"/>
<path d="M246.60 149.30 L249.40 147.10 L249.40 151.50 Z" fill="#f2ae10" stroke="#fff2c8" stroke-width="0.6" stroke-linejoin="round"/>
<path d="M290.40 175.00 L293.20 172.80 L293.20 177.20 Z" fill="#f2ae10" stroke="#fff2c8" stroke-width="0.6" stroke-linejoin="round"/>
<rect x="442.60" y="182.70" width="6.6" height="29.10" fill="#d8d4c0" opacity="0.15"/>
<path d="M445.90 185.00 L448.70 182.80 L448.70 187.20 Z" fill="#f2ae10" stroke="#fff2c8" stroke-width="0.6" stroke-linejoin="round"/>
<path d="M445.90 189.20 L448.70 187.00 L448.70 191.40 Z" fill="#f2ae10" stroke="#fff2c8" stroke-width="0.6" stroke-linejoin="round"/>
<path d="M445.90 193.30 L448.70 191.10 L448.70 195.50 Z" fill="#f2ae10" stroke="#fff2c8" stroke-width="0.6" stroke-linejoin="round"/>
<path d="M445.90 200.80 L448.70 198.60 L448.70 203.00 Z" fill="#f2ae10" stroke="#fff2c8" stroke-width="0.6" stroke-linejoin="round"/>
<path d="M445.90 205.00 L448.70 202.80 L448.70 207.20 Z" fill="#f2ae10" stroke="#fff2c8" stroke-width="0.6" stroke-linejoin="round"/>
<path d="M445.90 209.50 L448.70 207.30 L448.70 211.70 Z" fill="#f2ae10" stroke="#fff2c8" stroke-width="0.6" stroke-linejoin="round"/>
<path d="M442.10 185.00 L444.50 182.40 L444.70 183.80 L446.00 183.80 L446.00 186.20 L444.70 186.20 L444.50 187.60 Z" fill="#0c0cff" stroke="#f4f4ff" stroke-width="0.5" stroke-linejoin="round"/>
<path d="M442.10 189.20 L444.50 186.60 L444.70 188.00 L446.00 188.00 L446.00 190.40 L444.70 190.40 L444.50 191.80 Z" fill="#0c0cff" stroke="#f4f4ff" stroke-width="0.5" stroke-linejoin="round"/>
<path d="M442.10 193.30 L444.50 190.70 L444.70 192.10 L446.00 192.10 L446.00 194.50 L444.70 194.50 L444.50 195.90 Z" fill="#0c0cff" stroke="#f4f4ff" stroke-width="0.5" stroke-linejoin="round"/>
<path d="M442.10 200.80 L444.50 198.20 L444.70 199.60 L446.00 199.60 L446.00 202.00 L444.70 202.00 L444.50 203.40 Z" fill="#ff0c0c" stroke="#f4f4ff" stroke-width="0.5" stroke-linejoin="round"/>
<path d="M442.10 205.00 L444.50 202.40 L444.70 203.80 L446.00 203.80 L446.00 206.20 L444.70 206.20 L444.50 207.60 Z" fill="#ff0c0c" stroke="#f4f4ff" stroke-width="0.5" stroke-linejoin="round"/>
<path d="M442.10 209.50 L444.50 206.90 L444.70 208.30 L446.00 208.30 L446.00 210.70 L444.70 210.70 L444.50 212.10 Z" fill="#ff0c0c" stroke="#f4f4ff" stroke-width="0.5" stroke-linejoin="round"/>
<path d="M445.70 181.00 L448.50 178.80 L448.50 183.20 Z" fill="#f2ae10" stroke="#fff2c8" stroke-width="0.6" stroke-linejoin="round"/>
<rect x="430.10" y="221.40" width="6.6" height="13.70" fill="#d8d4c0" opacity="0.15"/>
<path d="M433.40 223.70 L436.20 221.50 L436.20 225.90 Z" fill="#f2ae10" stroke="#fff2c8" stroke-width="0.6" stroke-linejoin="round"/>
<path d="M433.40 228.20 L436.20 226.00 L436.20 230.40 Z" fill="#f2ae10" stroke="#fff2c8" stroke-width="0.6" stroke-linejoin="round"/>
<path d="M433.40 232.80 L436.20 230.60 L436.20 235.00 Z" fill="#f2ae10" stroke="#fff2c8" stroke-width="0.6" stroke-linejoin="round"/>
<path d="M429.60 223.70 L432.00 221.10 L432.20 222.50 L433.50 222.50 L433.50 224.90 L432.20 224.90 L432.00 226.30 Z" fill="#0c0cff" stroke="#f4f4ff" stroke-width="0.5" stroke-linejoin="round"/>
<path d="M429.60 228.20 L432.00 225.60 L432.20 227.00 L433.50 227.00 L433.50 229.40 L432.20 229.40 L432.00 230.80 Z" fill="#0c0cff" stroke="#f4f4ff" stroke-width="0.5" stroke-linejoin="round"/>
<path d="M429.60 232.80 L432.00 230.20 L432.20 231.60 L433.50 231.60 L433.50 234.00 L432.20 234.00 L432.00 235.40 Z" fill="#0c0cff" stroke="#f4f4ff" stroke-width="0.5" stroke-linejoin="round"/>
<path d="M437.30 219.30 L440.10 217.10 L440.10 221.50 Z" fill="#f2ae10" stroke="#fff2c8" stroke-width="0.6" stroke-linejoin="round"/>
<rect x="430.10" y="238.30" width="10" height="4.6" fill="#d8d4c0" opacity="0.15"/>
<path d="M433.3 240.6 H437.3" stroke="#ff1010" stroke-width="1.1"/>
<path d="M437.30 240.60 L440.10 238.40 L440.10 242.80 Z" fill="#f2ae10" stroke="#fff2c8" stroke-width="0.6" stroke-linejoin="round"/>
<path d="M429.60 240.60 L432.00 238.00 L432.20 239.40 L433.50 239.40 L433.50 241.80 L432.20 241.80 L432.00 243.20 Z" fill="#ff0c0c" stroke="#f4f4ff" stroke-width="0.5" stroke-linejoin="round"/>
<rect x="430.10" y="242.80" width="10" height="4.6" fill="#d8d4c0" opacity="0.15"/>
<path d="M433.3 245.1 H437.3" stroke="#ff1010" stroke-width="1.1"/>
<path d="M437.30 245.10 L440.10 242.90 L440.10 247.30 Z" fill="#f2ae10" stroke="#fff2c8" stroke-width="0.6" stroke-linejoin="round"/>
<path d="M429.60 245.10 L432.00 242.50 L432.20 243.90 L433.50 243.90 L433.50 246.30 L432.20 246.30 L432.00 247.70 Z" fill="#ff0c0c" stroke="#f4f4ff" stroke-width="0.5" stroke-linejoin="round"/>
<rect x="430.10" y="247.10" width="10" height="4.6" fill="#d8d4c0" opacity="0.15"/>
<path d="M433.3 249.4 H437.3" stroke="#ff1010" stroke-width="1.1"/>
<path d="M437.30 249.40 L440.10 247.20 L440.10 251.60 Z" fill="#f2ae10" stroke="#fff2c8" stroke-width="0.6" stroke-linejoin="round"/>
<path d="M429.60 249.40 L432.00 246.80 L432.20 248.20 L433.50 248.20 L433.50 250.60 L432.20 250.60 L432.00 252.00 Z" fill="#ff0c0c" stroke="#f4f4ff" stroke-width="0.5" stroke-linejoin="round"/>
<path d="M437.50 223.7 L434.90 221.4 L434.90 226 Z" fill="#0c0cff" stroke="#f0f0ff" stroke-width="0.4"/>
<path d="M445.80 228.70 L448.60 226.50 L448.60 230.90 Z" fill="#f2ae10" stroke="#fff2c8" stroke-width="0.6" stroke-linejoin="round"/>
<rect x="459.30" y="226.90" width="6.6" height="31.20" fill="#d8d4c0" opacity="0.15"/>
<path d="M462.60 229.20 L465.40 227.00 L465.40 231.40 Z" fill="#f2ae10" stroke="#fff2c8" stroke-width="0.6" stroke-linejoin="round"/>
<path d="M462.60 234.00 L465.40 231.80 L465.40 236.20 Z" fill="#f2ae10" stroke="#fff2c8" stroke-width="0.6" stroke-linejoin="round"/>
<path d="M462.60 238.50 L465.40 236.30 L465.40 240.70 Z" fill="#f2ae10" stroke="#fff2c8" stroke-width="0.6" stroke-linejoin="round"/>
<path d="M462.60 246.70 L465.40 244.50 L465.40 248.90 Z" fill="#f2ae10" stroke="#fff2c8" stroke-width="0.6" stroke-linejoin="round"/>
<path d="M462.60 251.20 L465.40 249.00 L465.40 253.40 Z" fill="#f2ae10" stroke="#fff2c8" stroke-width="0.6" stroke-linejoin="round"/>
<path d="M462.60 255.80 L465.40 253.60 L465.40 258.00 Z" fill="#f2ae10" stroke="#fff2c8" stroke-width="0.6" stroke-linejoin="round"/>
<path d="M458.80 229.20 L461.20 226.60 L461.40 228.00 L462.70 228.00 L462.70 230.40 L461.40 230.40 L461.20 231.80 Z" fill="#0c0cff" stroke="#f4f4ff" stroke-width="0.5" stroke-linejoin="round"/>
<path d="M458.80 234.00 L461.20 231.40 L461.40 232.80 L462.70 232.80 L462.70 235.20 L461.40 235.20 L461.20 236.60 Z" fill="#0c0cff" stroke="#f4f4ff" stroke-width="0.5" stroke-linejoin="round"/>
<path d="M458.80 238.50 L461.20 235.90 L461.40 237.30 L462.70 237.30 L462.70 239.70 L461.40 239.70 L461.20 241.10 Z" fill="#0c0cff" stroke="#f4f4ff" stroke-width="0.5" stroke-linejoin="round"/>
<path d="M458.80 246.70 L461.20 244.10 L461.40 245.50 L462.70 245.50 L462.70 247.90 L461.40 247.90 L461.20 249.30 Z" fill="#ff0c0c" stroke="#f4f4ff" stroke-width="0.5" stroke-linejoin="round"/>
<path d="M458.80 251.20 L461.20 248.60 L461.40 250.00 L462.70 250.00 L462.70 252.40 L461.40 252.40 L461.20 253.80 Z" fill="#ff0c0c" stroke="#f4f4ff" stroke-width="0.5" stroke-linejoin="round"/>
<path d="M458.80 255.80 L461.20 253.20 L461.40 254.60 L462.70 254.60 L462.70 257.00 L461.40 257.00 L461.20 258.40 Z" fill="#ff0c0c" stroke="#f4f4ff" stroke-width="0.5" stroke-linejoin="round"/>
<path d="M462.40 260.80 L465.20 258.60 L465.20 263.00 Z" fill="#f2ae10" stroke="#fff2c8" stroke-width="0.6" stroke-linejoin="round"/>
<rect x="347.40" y="330.20" width="6.6" height="30.50" fill="#d8d4c0" opacity="0.15"/>
<path d="M350.70 332.50 L353.50 330.30 L353.50 334.70 Z" fill="#f2ae10" stroke="#fff2c8" stroke-width="0.6" stroke-linejoin="round"/>
<path d="M350.70 337.20 L353.50 335.00 L353.50 339.40 Z" fill="#f2ae10" stroke="#fff2c8" stroke-width="0.6" stroke-linejoin="round"/>
<path d="M350.70 341.90 L353.50 339.70 L353.50 344.10 Z" fill="#f2ae10" stroke="#fff2c8" stroke-width="0.6" stroke-linejoin="round"/>
<path d="M350.70 349.40 L353.50 347.20 L353.50 351.60 Z" fill="#f2ae10" stroke="#fff2c8" stroke-width="0.6" stroke-linejoin="round"/>
<path d="M350.70 354.00 L353.50 351.80 L353.50 356.20 Z" fill="#f2ae10" stroke="#fff2c8" stroke-width="0.6" stroke-linejoin="round"/>
<path d="M350.70 358.40 L353.50 356.20 L353.50 360.60 Z" fill="#f2ae10" stroke="#fff2c8" stroke-width="0.6" stroke-linejoin="round"/>
<path d="M346.90 332.50 L349.30 329.90 L349.50 331.30 L350.80 331.30 L350.80 333.70 L349.50 333.70 L349.30 335.10 Z" fill="#0c0cff" stroke="#f4f4ff" stroke-width="0.5" stroke-linejoin="round"/>
<path d="M346.90 337.20 L349.30 334.60 L349.50 336.00 L350.80 336.00 L350.80 338.40 L349.50 338.40 L349.30 339.80 Z" fill="#0c0cff" stroke="#f4f4ff" stroke-width="0.5" stroke-linejoin="round"/>
<path d="M346.90 341.90 L349.30 339.30 L349.50 340.70 L350.80 340.70 L350.80 343.10 L349.50 343.10 L349.30 344.50 Z" fill="#0c0cff" stroke="#f4f4ff" stroke-width="0.5" stroke-linejoin="round"/>
<path d="M346.90 349.40 L349.30 346.80 L349.50 348.20 L350.80 348.20 L350.80 350.60 L349.50 350.60 L349.30 352.00 Z" fill="#ff0c0c" stroke="#f4f4ff" stroke-width="0.5" stroke-linejoin="round"/>
<path d="M346.90 354.00 L349.30 351.40 L349.50 352.80 L350.80 352.80 L350.80 355.20 L349.50 355.20 L349.30 356.60 Z" fill="#ff0c0c" stroke="#f4f4ff" stroke-width="0.5" stroke-linejoin="round"/>
<path d="M346.90 358.40 L349.30 355.80 L349.50 357.20 L350.80 357.20 L350.80 359.60 L349.50 359.60 L349.30 361.00 Z" fill="#ff0c0c" stroke="#f4f4ff" stroke-width="0.5" stroke-linejoin="round"/>
<path d="M350.90 372.00 L353.70 369.80 L353.70 374.20 Z" fill="#f2ae10" stroke="#fff2c8" stroke-width="0.6" stroke-linejoin="round"/>
<line x1="245" y1="171.5" x2="290" y2="175" stroke="#d01010" stroke-width="1" stroke-dasharray="1.5 1.6"/>
<text x="5.8" y="63.9" font-family="'Liberation Sans', sans-serif" font-size="6.6" fill="#12c6c6" font-weight="normal" text-anchor="start" textLength="28.9" lengthAdjust="spacingAndGlyphs"  stroke="#12c6c6" stroke-width="0.25">EURUSD,H1</text>
<text x="38.5" y="63.9" font-family="'Liberation Sans', sans-serif" font-size="6.6" fill="#12c6c6" font-weight="normal" text-anchor="start" textLength="17.8" lengthAdjust="spacingAndGlyphs"  stroke="#12c6c6" stroke-width="0.25">0.99530</text>
<text x="57.2" y="63.9" font-family="'Liberation Sans', sans-serif" font-size="6.6" fill="#12c6c6" font-weight="normal" text-anchor="start" textLength="18.8" lengthAdjust="spacingAndGlyphs"  stroke="#12c6c6" stroke-width="0.25">0.99609</text>
<text x="77" y="63.9" font-family="'Liberation Sans', sans-serif" font-size="6.6" fill="#12c6c6" font-weight="normal" text-anchor="start" textLength="17.7" lengthAdjust="spacingAndGlyphs"  stroke="#12c6c6" stroke-width="0.25">0.99518</text>
<text x="96.6" y="63.9" font-family="'Liberation Sans', sans-serif" font-size="6.6" fill="#12c6c6" font-weight="normal" text-anchor="start" textLength="17.8" lengthAdjust="spacingAndGlyphs"  stroke="#12c6c6" stroke-width="0.25">0.99564</text>
<text x="6.4" y="77" font-family="'Liberation Serif', serif" font-size="12.8" fill="#10d8d8" font-weight="normal" text-anchor="start" textLength="46.1" lengthAdjust="spacingAndGlyphs"  stroke="#10d8d8" stroke-width="0.2">Money rain</text>
<text x="6.25" y="89.9" font-family="'Liberation Sans', sans-serif" font-size="8.8" fill="#d414d4" font-weight="normal" text-anchor="start" textLength="21.8" lengthAdjust="spacingAndGlyphs"  stroke="#d414d4" stroke-width="0.25">Broker</text>
<text x="30.8" y="89.9" font-family="'Liberation Sans', sans-serif" font-size="8.8" fill="#12c6c6" font-weight="normal" text-anchor="start" textLength="57.2" lengthAdjust="spacingAndGlyphs"  stroke="#12c6c6" stroke-width="0.25">Raw Trading Ltd</text>
<text x="6.25" y="100.5" font-family="'Liberation Sans', sans-serif" font-size="8.8" fill="#d414d4" font-weight="normal" text-anchor="start" textLength="36.9" lengthAdjust="spacingAndGlyphs"  stroke="#d414d4" stroke-width="0.25">User name</text>
<text x="46.4" y="100.5" font-family="'Liberation Sans', sans-serif" font-size="8.8" fill="#12c6c6" font-weight="normal" text-anchor="start" textLength="149.8" lengthAdjust="spacingAndGlyphs" xml:space="preserve" stroke="#12c6c6" stroke-width="0.25">WIJESINGHA MUDIYANSELAGE  GUNAPALA</text>
<text x="6.25" y="111" font-family="'Liberation Sans', sans-serif" font-size="8.8" fill="#d414d4" font-weight="normal" text-anchor="start" textLength="27.5" lengthAdjust="spacingAndGlyphs"  stroke="#d414d4" stroke-width="0.25">Balance</text>
<text x="37.4" y="111" font-family="'Liberation Sans', sans-serif" font-size="8.8" fill="#12c6c6" font-weight="normal" text-anchor="start" textLength="32" lengthAdjust="spacingAndGlyphs"  stroke="#12c6c6" stroke-width="0.25">13489.02</text>
<text x="6.25" y="121" font-family="'Liberation Sans', sans-serif" font-size="8.8" fill="#d414d4" font-weight="normal" text-anchor="start" textLength="28.1" lengthAdjust="spacingAndGlyphs"  stroke="#d414d4" stroke-width="0.25">Equality</text>
<text x="37.4" y="121" font-family="'Liberation Sans', sans-serif" font-size="8.8" fill="#12c6c6" font-weight="normal" text-anchor="start" textLength="32.6" lengthAdjust="spacingAndGlyphs"  stroke="#12c6c6" stroke-width="0.25">13489.02</text>
<text x="4.5" y="437.5" font-family="'Liberation Sans', sans-serif" font-size="16.8" fill="#ff8e08" font-weight="normal" text-anchor="start" textLength="74.0" lengthAdjust="spacingAndGlyphs"  stroke="#ff8e08" stroke-width="0.12">Spread: 0.10</text>
<text x="84" y="428.7" font-family="'Liberation Sans', sans-serif" font-size="7.4" fill="#c83810" font-weight="normal" text-anchor="start" textLength="10.8" lengthAdjust="spacingAndGlyphs"  stroke="#c83810" stroke-width="0.1">max</text>
<text x="96.6" y="428.7" font-family="'Liberation Sans', sans-serif" font-size="7.0" fill="#e04818" font-weight="normal" text-anchor="start" textLength="10.6" lengthAdjust="spacingAndGlyphs"  stroke="#e04818" stroke-width="0.1">0.12</text>
<text x="84" y="433.9" font-family="'Liberation Sans', sans-serif" font-size="7.4" fill="#c07010" font-weight="normal" text-anchor="start" textLength="10.8" lengthAdjust="spacingAndGlyphs"  stroke="#c07010" stroke-width="0.1">avg</text>
<text x="96.6" y="433.9" font-family="'Liberation Sans', sans-serif" font-size="7.0" fill="#d09810" font-weight="normal" text-anchor="start" textLength="10.6" lengthAdjust="spacingAndGlyphs"  stroke="#d09810" stroke-width="0.1">0.10</text>
<text x="84" y="439.1" font-family="'Liberation Sans', sans-serif" font-size="7.4" fill="#a0a010" font-weight="normal" text-anchor="start" textLength="10.8" lengthAdjust="spacingAndGlyphs"  stroke="#a0a010" stroke-width="0.1">min</text>
<text x="96.6" y="439.1" font-family="'Liberation Sans', sans-serif" font-size="7.0" fill="#d0c010" font-weight="normal" text-anchor="start" textLength="10.6" lengthAdjust="spacingAndGlyphs"  stroke="#d0c010" stroke-width="0.1">0.10</text>
<text x="117" y="428.6" font-family="'Liberation Sans', sans-serif" font-size="6.4" fill="#7c7c7c" font-weight="normal" text-anchor="start" textLength="14.6" lengthAdjust="spacingAndGlyphs" >Status</text>
<text x="118" y="438.6" font-family="'Liberation Sans', sans-serif" font-size="10.6" fill="#12c6c6" font-weight="normal" text-anchor="start" textLength="31" lengthAdjust="spacingAndGlyphs"  stroke="#12c6c6" stroke-width="0.3">stopped</text>
</svg>
</body></html>
